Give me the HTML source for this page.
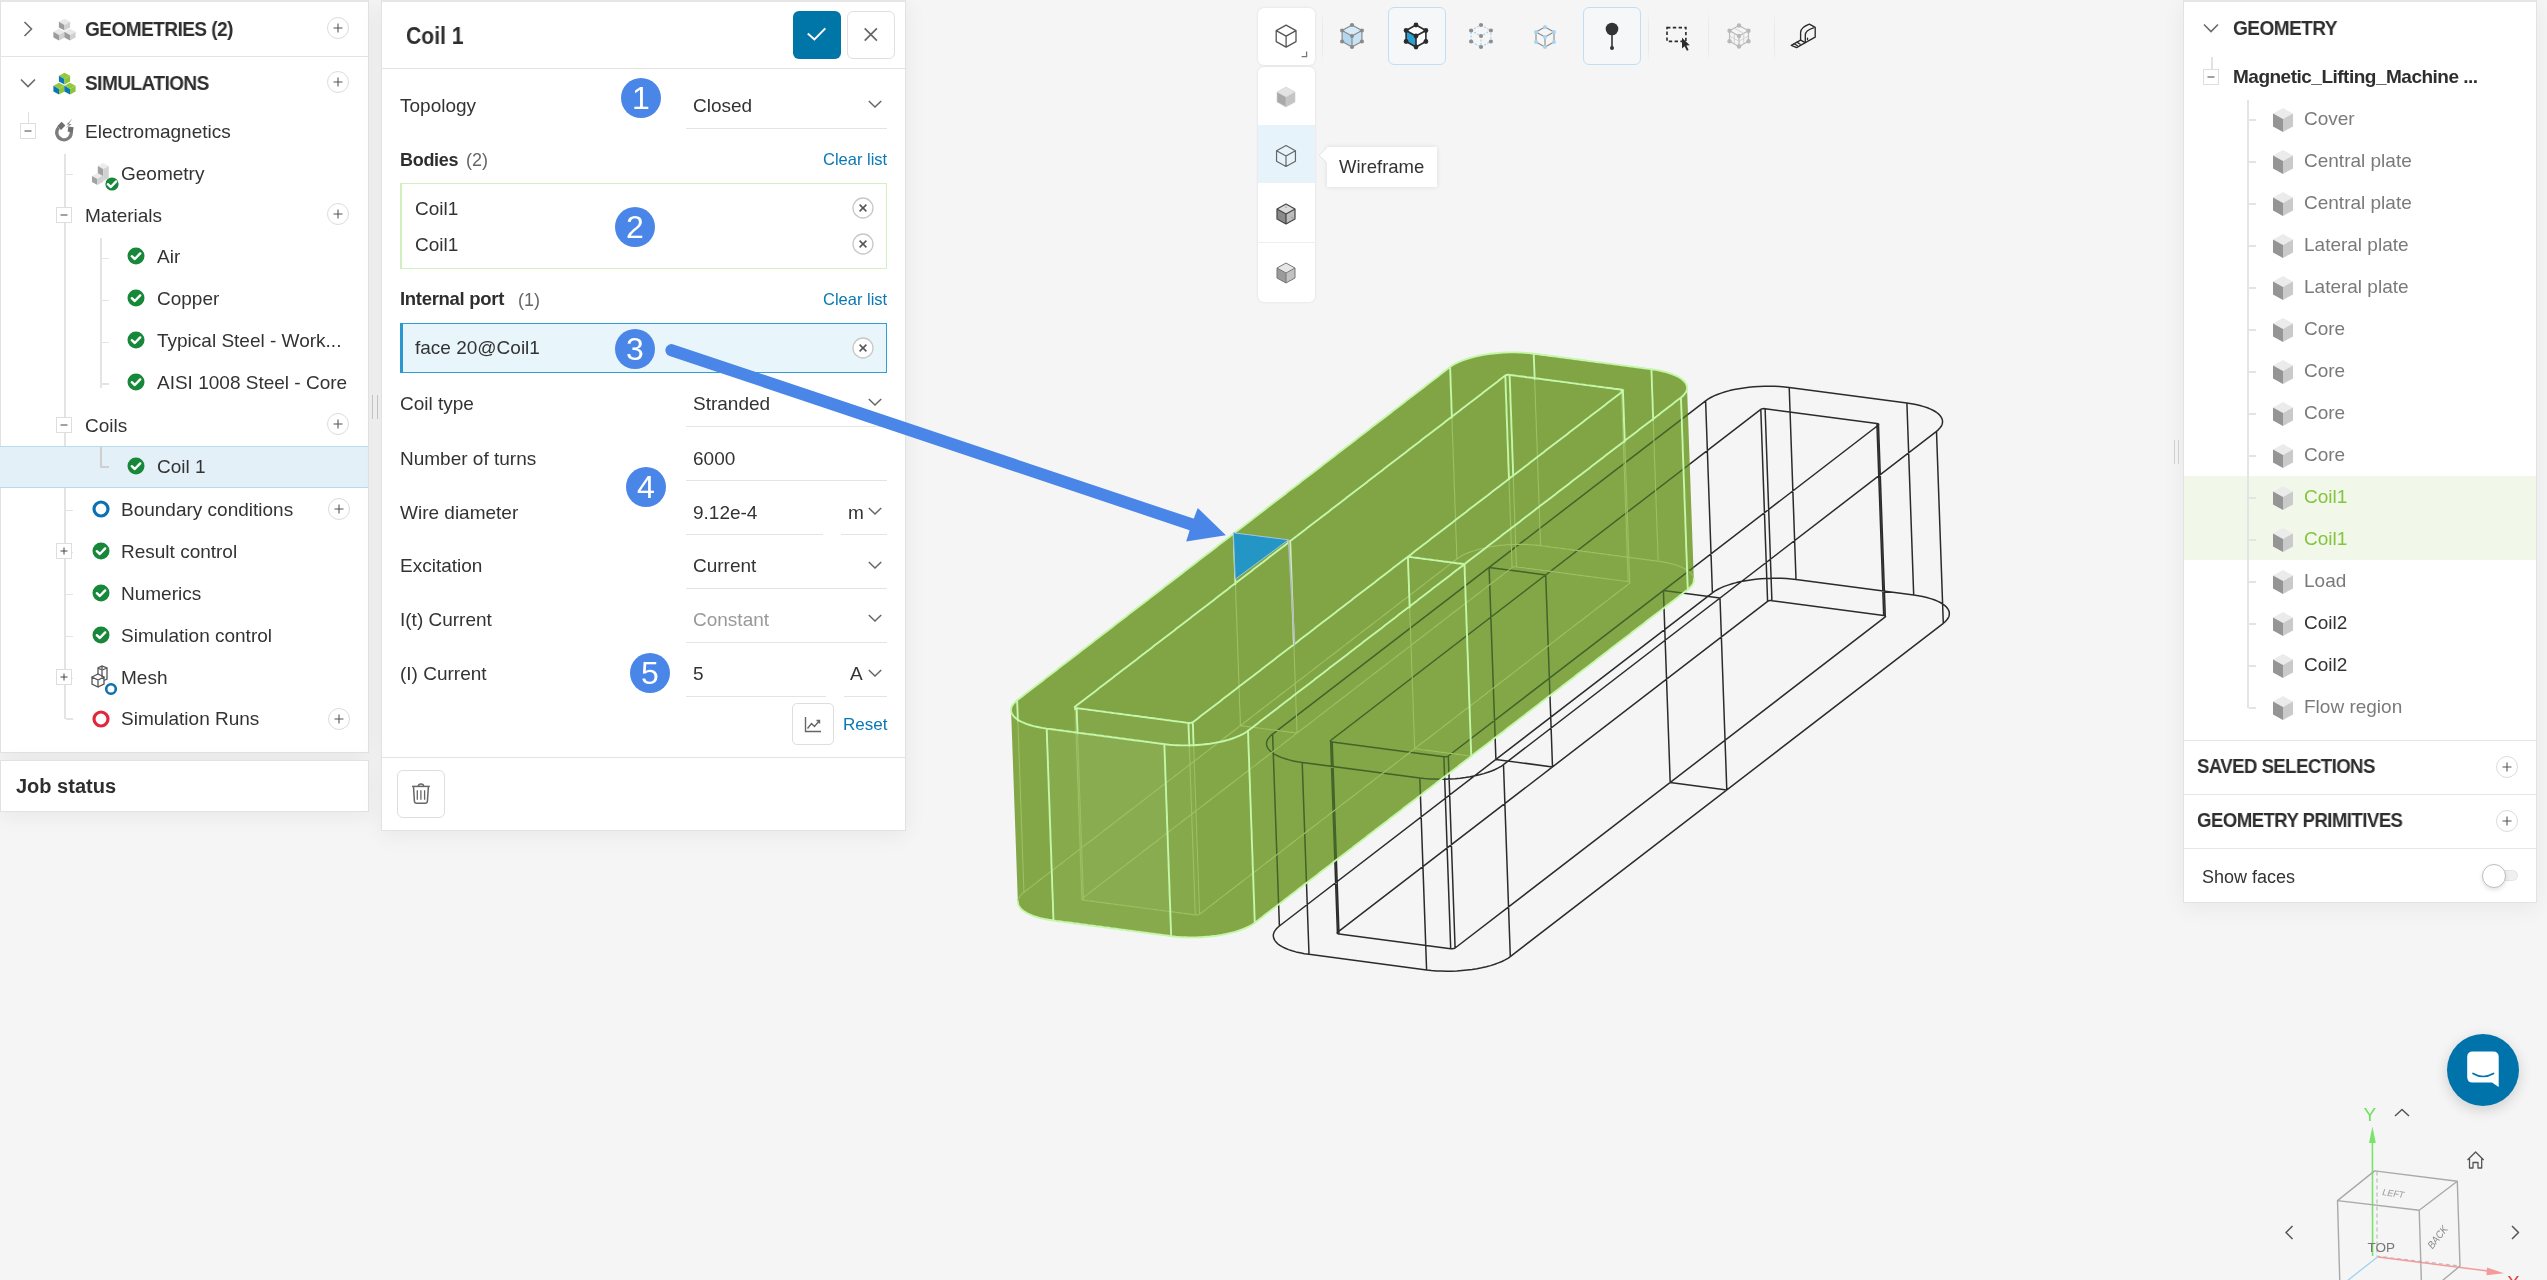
<!DOCTYPE html><html><head><meta charset="utf-8"><style>
html,body{margin:0;padding:0;}
body{width:2547px;height:1280px;position:relative;overflow:hidden;background:#f5f5f5;font-family:"Liberation Sans",sans-serif;}
.t{position:absolute;white-space:nowrap;line-height:1;will-change:transform;}
.panel{position:absolute;background:#fff;box-sizing:border-box;}
</style></head><body>
<div style="position:absolute;left:0px;top:0px;width:369px;height:753px;background:#fff;border:1px solid #e2e2e2;border-top:2px solid #e6e6e6;box-sizing:border-box;box-shadow:0 4px 22px rgba(0,0,0,0.06)"></div>
<div style="position:absolute;left:0px;top:56px;width:369px;height:1px;background:#e3e3e3"></div>
<div style="position:absolute;left:0px;top:760px;width:369px;height:52px;background:#fff;border:1px solid #e2e2e2;box-sizing:border-box;box-shadow:0 4px 22px rgba(0,0,0,0.06)"></div>
<div class="t" style="left:16.0px;top:776.1px;font-size:20px;font-weight:700;color:#2e2e2e;">Job status</div>
<svg style="position:absolute;left:16px;top:17px;" width="24" height="24" viewBox="0 0 24 24"><g transform="translate(12 12)"><path d="M-3.5 -7 L3.5 0 L-3.5 7" fill="none" stroke="#6a6a6a" stroke-width="1.6"/></g></svg>
<svg style="position:absolute;left:52px;top:16px;" width="26" height="26" viewBox="0 0 26 26"><g transform="translate(12.5,8.6)"><path d="M0 -5.9 L5.6 -2.8 L0 0.30000000000000027 L-5.6 -2.8 Z" fill="#e8e8e8"/><path d="M-5.6 -2.8 L0 0.30000000000000027 L0 5.9 L-5.6 2.8 Z" fill="#9c9c9c"/><path d="M5.6 -2.8 L0 0.30000000000000027 L0 5.9 L5.6 2.8 Z" fill="#d0d0d0"/></g><g transform="translate(7,18.6)"><path d="M0 -5.9 L5.6 -2.8 L0 0.30000000000000027 L-5.6 -2.8 Z" fill="#e8e8e8"/><path d="M-5.6 -2.8 L0 0.30000000000000027 L0 5.9 L-5.6 2.8 Z" fill="#9c9c9c"/><path d="M5.6 -2.8 L0 0.30000000000000027 L0 5.9 L5.6 2.8 Z" fill="#d0d0d0"/></g><g transform="translate(18,18.6)"><path d="M0 -5.9 L5.6 -2.8 L0 0.30000000000000027 L-5.6 -2.8 Z" fill="#e8e8e8"/><path d="M-5.6 -2.8 L0 0.30000000000000027 L0 5.9 L-5.6 2.8 Z" fill="#9c9c9c"/><path d="M5.6 -2.8 L0 0.30000000000000027 L0 5.9 L5.6 2.8 Z" fill="#d0d0d0"/></g></svg>
<div class="t" style="left:85.0px;top:18.6px;font-size:20.5px;font-weight:700;color:#2e2e2e;letter-spacing:-0.6px;transform:scaleX(0.93);transform-origin:0 0">GEOMETRIES (2)</div>
<svg style="position:absolute;left:326px;top:16px;" width="24" height="24" viewBox="0 0 24 24"><circle cx="12" cy="12" r="10.5" fill="#fff" stroke="#dcdcdc" stroke-width="1"/><path d="M12 7.5V16.5M7.5 12H16.5" stroke="#555" stroke-width="1.1"/></svg>
<svg style="position:absolute;left:16px;top:71px;" width="24" height="24" viewBox="0 0 24 24"><g transform="translate(12 12)"><path d="M-7 -3.5 L0 3.5 L7 -3.5" fill="none" stroke="#6a6a6a" stroke-width="1.6"/></g></svg>
<svg style="position:absolute;left:52px;top:70px;" width="26" height="26" viewBox="0 0 26 26"><g transform="translate(12.5,8.6)"><path d="M0 -5.9 L5.6 -2.8 L0 0.30000000000000027 L-5.6 -2.8 Z" fill="#93c83f"/><path d="M-5.6 -2.8 L0 0.30000000000000027 L0 5.9 L-5.6 2.8 Z" fill="#0b78b6"/><path d="M5.6 -2.8 L0 0.30000000000000027 L0 5.9 L5.6 2.8 Z" fill="#8cc43a"/></g><g transform="translate(7,18.6)"><path d="M0 -5.9 L5.6 -2.8 L0 0.30000000000000027 L-5.6 -2.8 Z" fill="#93c83f"/><path d="M-5.6 -2.8 L0 0.30000000000000027 L0 5.9 L-5.6 2.8 Z" fill="#0b78b6"/><path d="M5.6 -2.8 L0 0.30000000000000027 L0 5.9 L5.6 2.8 Z" fill="#8cc43a"/></g><g transform="translate(18,18.6)"><path d="M0 -5.9 L5.6 -2.8 L0 0.30000000000000027 L-5.6 -2.8 Z" fill="#93c83f"/><path d="M-5.6 -2.8 L0 0.30000000000000027 L0 5.9 L-5.6 2.8 Z" fill="#0b78b6"/><path d="M5.6 -2.8 L0 0.30000000000000027 L0 5.9 L5.6 2.8 Z" fill="#8cc43a"/></g></svg>
<div class="t" style="left:85.0px;top:72.6px;font-size:20.5px;font-weight:700;color:#2e2e2e;letter-spacing:-0.6px;transform:scaleX(0.93);transform-origin:0 0">SIMULATIONS</div>
<svg style="position:absolute;left:326px;top:70px;" width="24" height="24" viewBox="0 0 24 24"><circle cx="12" cy="12" r="10.5" fill="#fff" stroke="#dcdcdc" stroke-width="1"/><path d="M12 7.5V16.5M7.5 12H16.5" stroke="#555" stroke-width="1.1"/></svg>
<div style="position:absolute;left:28px;top:112px;width:1px;height:11px;background:#dedede"></div>
<div style="position:absolute;left:64px;top:154px;width:2px;height:54px;background:#e4e4e4"></div>
<div style="position:absolute;left:64px;top:223px;width:2px;height:496px;background:#e4e4e4"></div>
<div style="position:absolute;left:100px;top:238px;width:2px;height:150px;background:#e4e4e4"></div>
<div style="position:absolute;left:100px;top:446px;width:2px;height:22px;background:#d8d8d8"></div>
<div style="position:absolute;left:66px;top:174px;width:7px;height:1px;background:#e4e4e4"></div>
<div style="position:absolute;left:66px;top:510px;width:7px;height:1px;background:#e4e4e4"></div>
<div style="position:absolute;left:66px;top:552px;width:7px;height:1px;background:#e4e4e4"></div>
<div style="position:absolute;left:66px;top:594px;width:7px;height:1px;background:#e4e4e4"></div>
<div style="position:absolute;left:66px;top:636px;width:7px;height:1px;background:#e4e4e4"></div>
<div style="position:absolute;left:66px;top:678px;width:7px;height:1px;background:#e4e4e4"></div>
<div style="position:absolute;left:66px;top:718px;width:7px;height:2px;background:#e4e4e4"></div>
<div style="position:absolute;left:102px;top:258px;width:7px;height:1px;background:#e4e4e4"></div>
<div style="position:absolute;left:102px;top:300px;width:7px;height:1px;background:#e4e4e4"></div>
<div style="position:absolute;left:102px;top:342px;width:7px;height:1px;background:#e4e4e4"></div>
<div style="position:absolute;left:100px;top:383px;width:9px;height:2px;background:#e4e4e4"></div>
<div style="position:absolute;left:0px;top:446px;width:368px;height:42px;background:#e3f0f8;border-top:1px solid #b9dbef;border-bottom:1px solid #b9dbef;box-sizing:border-box"></div>
<div style="position:absolute;left:100px;top:447px;width:2px;height:20px;background:#cfcfcf"></div>
<div style="position:absolute;left:100px;top:466px;width:9px;height:2px;background:#cfcfcf"></div>
<svg style="position:absolute;left:20px;top:123px;" width="16" height="16" viewBox="0 0 16 16"><rect x="0.5" y="0.5" width="15" height="15" fill="#fff" stroke="#dedede"/><path d="M4.5 8H11.5" stroke="#444" stroke-width="1"/></svg>
<svg style="position:absolute;left:52px;top:118px;" width="26" height="26" viewBox="0 0 26 26"><path d="M6.6 9.6 A7.3 7.3 0 1 0 19.2 13.2" fill="none" stroke="#7d7d7d" stroke-width="3.2"/><path d="M5.2 8.2 L9.6 3.8 L13.4 7.6 L9 12 Z" fill="#6f6f6f"/><path d="M15.6 13.6 L16.4 8.4 L21.6 9.2 L20.8 14.4 Z" fill="#6f6f6f"/><path d="M20.2 0.8 L14.6 6.4 L17.6 6.6 L13.2 10.6 L19.6 6.2 L16.8 5.8 Z" fill="#7d7d7d"/></svg>
<div class="t" style="left:85.0px;top:122.2px;font-size:19px;font-weight:400;color:#333;">Electromagnetics</div>
<svg style="position:absolute;left:88px;top:158px;" width="26" height="30" viewBox="0 0 26 30"><path d="M9.8 8 L15.3 5 L20.8 8 L15.3 11 Z" fill="#ececec"/><path d="M9.8 8 L15.3 11 L15.3 23 L9.8 20 Z" fill="#a2a2a2"/><path d="M20.8 8 L15.3 11 L15.3 23 L20.8 20 Z" fill="#d2d2d2"/><path d="M4 18 L9.5 15 L15 18 L9.5 21 Z" fill="#ececec"/><path d="M4 18 L9.5 21 L9.5 27 L4 24 Z" fill="#a2a2a2"/><path d="M15 18 L9.5 21 L9.5 27 L15 24 Z" fill="#d2d2d2"/></svg>
<svg style="position:absolute;left:101.5px;top:174px;" width="20" height="20" viewBox="0 0 20 20"><circle cx="10" cy="10" r="6.6" fill="#17873a"/><path d="M5.8 10.2 L8.8 13 L14.2 7.4" fill="none" stroke="#fff" stroke-width="2.4" stroke-linecap="round" stroke-linejoin="round"/></svg>
<div class="t" style="left:121.0px;top:164.4px;font-size:19px;font-weight:400;color:#333;">Geometry</div>
<svg style="position:absolute;left:56px;top:207px;" width="16" height="16" viewBox="0 0 16 16"><rect x="0.5" y="0.5" width="15" height="15" fill="#fff" stroke="#dedede"/><path d="M4.5 8H11.5" stroke="#444" stroke-width="1"/></svg>
<div class="t" style="left:85.0px;top:206.4px;font-size:19px;font-weight:400;color:#333;">Materials</div>
<svg style="position:absolute;left:326px;top:202px;" width="24" height="24" viewBox="0 0 24 24"><circle cx="12" cy="12" r="10.5" fill="#fff" stroke="#dcdcdc" stroke-width="1"/><path d="M12 7.5V16.5M7.5 12H16.5" stroke="#555" stroke-width="1.1"/></svg>
<svg style="position:absolute;left:126px;top:246px;" width="20" height="20" viewBox="0 0 20 20"><circle cx="10" cy="10" r="8.5" fill="#17873a"/><path d="M5.8 10.2 L8.8 13 L14.2 7.4" fill="none" stroke="#fff" stroke-width="2.4" stroke-linecap="round" stroke-linejoin="round"/></svg>
<div class="t" style="left:157.0px;top:247.4px;font-size:19px;font-weight:400;color:#333;">Air</div>
<svg style="position:absolute;left:126px;top:288px;" width="20" height="20" viewBox="0 0 20 20"><circle cx="10" cy="10" r="8.5" fill="#17873a"/><path d="M5.8 10.2 L8.8 13 L14.2 7.4" fill="none" stroke="#fff" stroke-width="2.4" stroke-linecap="round" stroke-linejoin="round"/></svg>
<div class="t" style="left:157.0px;top:289.4px;font-size:19px;font-weight:400;color:#333;">Copper</div>
<svg style="position:absolute;left:126px;top:330px;" width="20" height="20" viewBox="0 0 20 20"><circle cx="10" cy="10" r="8.5" fill="#17873a"/><path d="M5.8 10.2 L8.8 13 L14.2 7.4" fill="none" stroke="#fff" stroke-width="2.4" stroke-linecap="round" stroke-linejoin="round"/></svg>
<div class="t" style="left:157.0px;top:331.4px;font-size:19px;font-weight:400;color:#333;">Typical Steel - Work...</div>
<svg style="position:absolute;left:126px;top:372px;" width="20" height="20" viewBox="0 0 20 20"><circle cx="10" cy="10" r="8.5" fill="#17873a"/><path d="M5.8 10.2 L8.8 13 L14.2 7.4" fill="none" stroke="#fff" stroke-width="2.4" stroke-linecap="round" stroke-linejoin="round"/></svg>
<div class="t" style="left:157.0px;top:373.4px;font-size:19px;font-weight:400;color:#333;">AISI 1008 Steel - Core</div>
<svg style="position:absolute;left:56px;top:417px;" width="16" height="16" viewBox="0 0 16 16"><rect x="0.5" y="0.5" width="15" height="15" fill="#fff" stroke="#dedede"/><path d="M4.5 8H11.5" stroke="#444" stroke-width="1"/></svg>
<div class="t" style="left:85.0px;top:416.4px;font-size:19px;font-weight:400;color:#333;">Coils</div>
<svg style="position:absolute;left:326px;top:412px;" width="24" height="24" viewBox="0 0 24 24"><circle cx="12" cy="12" r="10.5" fill="#fff" stroke="#dcdcdc" stroke-width="1"/><path d="M12 7.5V16.5M7.5 12H16.5" stroke="#555" stroke-width="1.1"/></svg>
<svg style="position:absolute;left:126px;top:456px;" width="20" height="20" viewBox="0 0 20 20"><circle cx="10" cy="10" r="8.5" fill="#17873a"/><path d="M5.8 10.2 L8.8 13 L14.2 7.4" fill="none" stroke="#fff" stroke-width="2.4" stroke-linecap="round" stroke-linejoin="round"/></svg>
<div class="t" style="left:157.0px;top:457.4px;font-size:19px;font-weight:400;color:#333;">Coil 1</div>
<svg style="position:absolute;left:90.5px;top:499px;" width="20" height="20" viewBox="0 0 20 20"><circle cx="10" cy="10" r="7" fill="none" stroke="#0a72b0" stroke-width="3.2"/></svg>
<div class="t" style="left:121.0px;top:499.9px;font-size:19px;font-weight:400;color:#333;">Boundary conditions</div>
<svg style="position:absolute;left:326.5px;top:497px;" width="24" height="24" viewBox="0 0 24 24"><circle cx="12" cy="12" r="10.5" fill="#fff" stroke="#dcdcdc" stroke-width="1"/><path d="M12 7.5V16.5M7.5 12H16.5" stroke="#555" stroke-width="1.1"/></svg>
<svg style="position:absolute;left:56px;top:543px;" width="16" height="16" viewBox="0 0 16 16"><rect x="0.5" y="0.5" width="15" height="15" fill="#fff" stroke="#dedede"/><path d="M4.5 8H11.5" stroke="#444" stroke-width="1"/><path d="M8 4.5V11.5" stroke="#444" stroke-width="1"/></svg>
<svg style="position:absolute;left:90.5px;top:541px;" width="20" height="20" viewBox="0 0 20 20"><circle cx="10" cy="10" r="8.5" fill="#17873a"/><path d="M5.8 10.2 L8.8 13 L14.2 7.4" fill="none" stroke="#fff" stroke-width="2.4" stroke-linecap="round" stroke-linejoin="round"/></svg>
<div class="t" style="left:121.0px;top:541.9px;font-size:19px;font-weight:400;color:#333;">Result control</div>
<svg style="position:absolute;left:90.5px;top:583px;" width="20" height="20" viewBox="0 0 20 20"><circle cx="10" cy="10" r="8.5" fill="#17873a"/><path d="M5.8 10.2 L8.8 13 L14.2 7.4" fill="none" stroke="#fff" stroke-width="2.4" stroke-linecap="round" stroke-linejoin="round"/></svg>
<div class="t" style="left:121.0px;top:583.9px;font-size:19px;font-weight:400;color:#333;">Numerics</div>
<svg style="position:absolute;left:90.5px;top:625px;" width="20" height="20" viewBox="0 0 20 20"><circle cx="10" cy="10" r="8.5" fill="#17873a"/><path d="M5.8 10.2 L8.8 13 L14.2 7.4" fill="none" stroke="#fff" stroke-width="2.4" stroke-linecap="round" stroke-linejoin="round"/></svg>
<div class="t" style="left:121.0px;top:625.9px;font-size:19px;font-weight:400;color:#333;">Simulation control</div>
<svg style="position:absolute;left:56px;top:669px;" width="16" height="16" viewBox="0 0 16 16"><rect x="0.5" y="0.5" width="15" height="15" fill="#fff" stroke="#dedede"/><path d="M4.5 8H11.5" stroke="#444" stroke-width="1"/><path d="M8 4.5V11.5" stroke="#444" stroke-width="1"/></svg>
<svg style="position:absolute;left:90px;top:665px;" width="24" height="26" viewBox="0 0 24 26"><g fill="none" stroke="#555" stroke-width="1.3"><path d="M2 12 L8 9 L14 12 L8 15 Z M2 12 V19 L8 22 V15 M8 22 L14 19 V12"/><path d="M8 9 V3 L12 1 L17 3 V14 L14 15.5 M12 1 V4 M8 3 L12 5 L17 3 M12 5 V12"/></g></svg>
<svg style="position:absolute;left:101px;top:679px;" width="20" height="20" viewBox="0 0 20 20"><circle cx="10" cy="10" r="4.8" fill="none" stroke="#0a72b0" stroke-width="2.6"/></svg>
<div class="t" style="left:121.0px;top:667.9px;font-size:19px;font-weight:400;color:#333;">Mesh</div>
<svg style="position:absolute;left:90.5px;top:709px;" width="20" height="20" viewBox="0 0 20 20"><circle cx="10" cy="10" r="7" fill="none" stroke="#e0283c" stroke-width="3.2"/></svg>
<div class="t" style="left:121.0px;top:709.4px;font-size:19px;font-weight:400;color:#333;">Simulation Runs</div>
<svg style="position:absolute;left:326.5px;top:707px;" width="24" height="24" viewBox="0 0 24 24"><circle cx="12" cy="12" r="10.5" fill="#fff" stroke="#dcdcdc" stroke-width="1"/><path d="M12 7.5V16.5M7.5 12H16.5" stroke="#555" stroke-width="1.1"/></svg>
<div style="position:absolute;left:372px;top:395px;width:1px;height:24px;background:#c6c6c6"></div>
<div style="position:absolute;left:377px;top:395px;width:1px;height:24px;background:#c6c6c6"></div>
<div style="position:absolute;left:381px;top:0px;width:525px;height:831px;background:#fff;border:1px solid #e2e2e2;border-top:2px solid #e6e6e6;box-sizing:border-box;box-shadow:0 4px 22px rgba(0,0,0,0.06)"></div>
<div class="t" style="left:406.0px;top:24.5px;font-size:23px;font-weight:700;color:#2e2e2e;transform:scaleX(0.92);transform-origin:0 0">Coil 1</div>
<div style="position:absolute;left:793px;top:11px;width:48px;height:48px;background:#0076a8;border-radius:6px"></div>
<svg style="position:absolute;left:793px;top:11px;" width="48" height="48" viewBox="0 0 48 48"><path d="M14.8 22.6 L21.4 28.4 L32.3 17.4" fill="none" stroke="#fff" stroke-width="2"/></svg>
<div style="position:absolute;left:847px;top:11px;width:48px;height:48px;background:#fff;border:1px solid #e0e0e0;border-radius:6px;box-sizing:border-box"></div>
<svg style="position:absolute;left:847px;top:11px;" width="48" height="48" viewBox="0 0 48 48"><path d="M17.7 17.4 L29.9 29.6 M29.9 17.4 L17.7 29.6" fill="none" stroke="#666" stroke-width="1.7"/></svg>
<div style="position:absolute;left:382px;top:68px;width:523px;height:1px;background:#e3e3e3"></div>
<div class="t" style="left:400.0px;top:95.6px;font-size:19px;font-weight:400;color:#333;">Topology</div>
<div class="t" style="left:692.5px;top:95.9px;font-size:19px;font-weight:400;color:#333;">Closed</div>
<svg style="position:absolute;left:867px;top:99px;" width="16" height="10" viewBox="0 0 16 10"><path d="M1.8 2 L8 8 L14.2 2" fill="none" stroke="#666" stroke-width="1.5"/></svg>
<div style="position:absolute;left:686px;top:128px;width:201px;height:1px;background:#e4e4e4"></div>
<div class="t" style="left:400.0px;top:150.8px;font-size:18px;font-weight:700;color:#2e2e2e;letter-spacing:-0.3px">Bodies</div>
<div class="t" style="left:466.0px;top:150.8px;font-size:18px;font-weight:400;color:#666;">(2)</div>
<div class="t" style="right:1660.0px;top:151.0px;font-size:16.5px;font-weight:400;color:#0a78b4;">Clear list</div>
<div style="position:absolute;left:400px;top:183px;width:487px;height:86px;background:#fff;border:1.5px solid #d2f1bd;border-left:2.5px solid #d2f0bd;box-sizing:border-box"></div>
<div class="t" style="left:415.3px;top:198.5px;font-size:19px;font-weight:400;color:#333;">Coil1</div>
<div class="t" style="left:415.3px;top:234.6px;font-size:19px;font-weight:400;color:#333;">Coil1</div>
<svg style="position:absolute;left:850.5px;top:196px;" width="24" height="24" viewBox="0 0 24 24"><circle cx="12" cy="12" r="10" fill="#fff" stroke="#c8c8c8" stroke-width="1.3"/><path d="M8.6 8.6L15.4 15.4M15.4 8.6L8.6 15.4" stroke="#555" stroke-width="1.5"/></svg>
<svg style="position:absolute;left:850.5px;top:232px;" width="24" height="24" viewBox="0 0 24 24"><circle cx="12" cy="12" r="10" fill="#fff" stroke="#c8c8c8" stroke-width="1.3"/><path d="M8.6 8.6L15.4 15.4M15.4 8.6L8.6 15.4" stroke="#555" stroke-width="1.5"/></svg>
<div class="t" style="left:400.0px;top:290.3px;font-size:18.5px;font-weight:700;color:#2e2e2e;letter-spacing:-0.3px">Internal port</div>
<div class="t" style="left:518.0px;top:290.8px;font-size:18px;font-weight:400;color:#666;">(1)</div>
<div class="t" style="right:1660.0px;top:291.0px;font-size:16.5px;font-weight:400;color:#0a78b4;">Clear list</div>
<div style="position:absolute;left:400px;top:323px;width:487px;height:50px;background:#e8f5fb;border:1.5px solid #2f9fd4;border-left:3px solid #2a98cf;box-sizing:border-box"></div>
<div class="t" style="left:415.3px;top:338.3px;font-size:19px;font-weight:400;color:#333;">face 20@Coil1</div>
<svg style="position:absolute;left:850.5px;top:336px;" width="24" height="24" viewBox="0 0 24 24"><circle cx="12" cy="12" r="10" fill="#fff" stroke="#c8c8c8" stroke-width="1.3"/><path d="M8.6 8.6L15.4 15.4M15.4 8.6L8.6 15.4" stroke="#555" stroke-width="1.5"/></svg>
<div class="t" style="left:400.0px;top:393.6px;font-size:19px;font-weight:400;color:#333;">Coil type</div>
<div class="t" style="left:692.5px;top:393.6px;font-size:19px;font-weight:400;color:#333;">Stranded</div>
<svg style="position:absolute;left:867px;top:397.2px;" width="16" height="10" viewBox="0 0 16 10"><path d="M1.8 2 L8 8 L14.2 2" fill="none" stroke="#666" stroke-width="1.5"/></svg>
<div style="position:absolute;left:686px;top:426px;width:201px;height:1px;background:#e4e4e4"></div>
<div class="t" style="left:400.0px;top:448.5px;font-size:19px;font-weight:400;color:#333;">Number of turns</div>
<div class="t" style="left:692.5px;top:448.5px;font-size:19px;font-weight:400;color:#333;">6000</div>
<div style="position:absolute;left:686px;top:480px;width:201px;height:1px;background:#e4e4e4"></div>
<div class="t" style="left:400.0px;top:502.6px;font-size:19px;font-weight:400;color:#333;">Wire diameter</div>
<div class="t" style="left:692.5px;top:502.6px;font-size:19px;font-weight:400;color:#333;">9.12e-4</div>
<div class="t" style="left:847.5px;top:502.6px;font-size:19px;font-weight:400;color:#333;">m</div>
<svg style="position:absolute;left:867px;top:506.20000000000005px;" width="16" height="10" viewBox="0 0 16 10"><path d="M1.8 2 L8 8 L14.2 2" fill="none" stroke="#666" stroke-width="1.5"/></svg>
<div style="position:absolute;left:686px;top:534px;width:137px;height:1px;background:#e4e4e4"></div>
<div style="position:absolute;left:841px;top:534px;width:46px;height:1px;background:#e4e4e4"></div>
<div class="t" style="left:400.0px;top:555.9px;font-size:19px;font-weight:400;color:#333;">Excitation</div>
<div class="t" style="left:692.5px;top:555.9px;font-size:19px;font-weight:400;color:#333;">Current</div>
<svg style="position:absolute;left:867px;top:559.5px;" width="16" height="10" viewBox="0 0 16 10"><path d="M1.8 2 L8 8 L14.2 2" fill="none" stroke="#666" stroke-width="1.5"/></svg>
<div style="position:absolute;left:686px;top:588px;width:201px;height:1px;background:#e4e4e4"></div>
<div class="t" style="left:400.0px;top:609.7px;font-size:19px;font-weight:400;color:#333;">I(t) Current</div>
<div class="t" style="left:692.5px;top:609.7px;font-size:19px;font-weight:400;color:#999;">Constant</div>
<svg style="position:absolute;left:867px;top:613.3px;" width="16" height="10" viewBox="0 0 16 10"><path d="M1.8 2 L8 8 L14.2 2" fill="none" stroke="#666" stroke-width="1.5"/></svg>
<div style="position:absolute;left:686px;top:642px;width:201px;height:1px;background:#e4e4e4"></div>
<div class="t" style="left:400.0px;top:664.4px;font-size:19px;font-weight:400;color:#333;">(I) Current</div>
<div class="t" style="left:692.5px;top:664.4px;font-size:19px;font-weight:400;color:#333;">5</div>
<div class="t" style="left:849.5px;top:664.4px;font-size:19px;font-weight:400;color:#333;">A</div>
<svg style="position:absolute;left:867px;top:668.0px;" width="16" height="10" viewBox="0 0 16 10"><path d="M1.8 2 L8 8 L14.2 2" fill="none" stroke="#666" stroke-width="1.5"/></svg>
<div style="position:absolute;left:686px;top:696px;width:140px;height:1px;background:#e4e4e4"></div>
<div style="position:absolute;left:844px;top:696px;width:43px;height:1px;background:#e4e4e4"></div>
<div style="position:absolute;left:792px;top:703px;width:42px;height:42px;background:#fff;border:1px solid #dedede;border-radius:5px;box-sizing:border-box"></div>
<svg style="position:absolute;left:792px;top:703px;" width="42" height="42" viewBox="0 0 42 42"><path d="M13.5 14 V28.5 H29" fill="none" stroke="#666" stroke-width="1.4"/><path d="M15.5 25.5 L19.5 20.5 L22.5 23.5 L27.5 17.5 M24.5 17.5 H27.5 V20.5" fill="none" stroke="#666" stroke-width="1.4"/></svg>
<div class="t" style="right:1660.0px;top:715.6px;font-size:17px;font-weight:400;color:#0a78b4;">Reset</div>
<div style="position:absolute;left:382px;top:757px;width:523px;height:1px;background:#e3e3e3"></div>
<div style="position:absolute;left:397px;top:770px;width:48px;height:48px;background:#fff;border:1px solid #dedede;border-radius:6px;box-sizing:border-box"></div>
<svg style="position:absolute;left:397px;top:770px;" width="48" height="48" viewBox="0 0 48 48"><g fill="none" stroke="#666" stroke-width="1.5"><path d="M15 16.4 H32.8"/><path d="M21.4 16.2 A2.6 2.2 0 0 1 26.6 16.2"/><path d="M16.5 16.5 L17.4 31.2 Q17.6 33.2 19.6 33.2 H28.2 Q30.2 33.2 30.4 31.2 L31.4 16.5"/><path d="M20.3 20.2 V29.8 M23.9 20.2 V29.8 M27.6 20.2 V29.8" stroke-width="1.3"/></g></svg>
<div style="position:absolute;left:2183px;top:0px;width:354px;height:903px;background:#fff;border:1px solid #e2e2e2;border-top:2px solid #e6e6e6;box-sizing:border-box;box-shadow:0 4px 22px rgba(0,0,0,0.06)"></div>
<svg style="position:absolute;left:2199px;top:16px;" width="24" height="24" viewBox="0 0 24 24"><g transform="translate(12 12)"><path d="M-7 -3.5 L0 3.5 L7 -3.5" fill="none" stroke="#6a6a6a" stroke-width="1.6"/></g></svg>
<div class="t" style="left:2233.0px;top:18.1px;font-size:20.5px;font-weight:700;color:#2e2e2e;letter-spacing:-0.6px;transform:scaleX(0.93);transform-origin:0 0">GEOMETRY</div>
<div style="position:absolute;left:2211px;top:57px;width:2px;height:12px;background:#e2e2e2"></div>
<svg style="position:absolute;left:2203px;top:69px;" width="16" height="16" viewBox="0 0 16 16"><rect x="0.5" y="0.5" width="15" height="15" fill="#fff" stroke="#dedede"/><path d="M4.5 8H11.5" stroke="#444" stroke-width="1"/></svg>
<div class="t" style="left:2232.6px;top:67.4px;font-size:19px;font-weight:700;color:#2e2e2e;letter-spacing:-0.5px">Magnetic_Lifting_Machine ...</div>
<div style="position:absolute;left:2184px;top:476px;width:352px;height:84px;background:#f1f8ea"></div>
<div style="position:absolute;left:2247px;top:100px;width:2px;height:608px;background:#e4e4e4"></div>
<div style="position:absolute;left:2249px;top:119px;width:7px;height:2px;background:#e4e4e4"></div>
<svg style="position:absolute;left:2271.8px;top:106.5px;" width="22" height="26" viewBox="0 0 22 26"><path d="M11 1 L21 6.5 L11 12 L1 6.5 Z" fill="#ebebeb"/><path d="M1 6.5 L11 12 L11 25 L1 19.5 Z" fill="#959595"/><path d="M21 6.5 L11 12 L11 25 L21 19.5 Z" fill="#cacaca"/></svg>
<div class="t" style="left:2304.4px;top:109.4px;font-size:19px;font-weight:400;color:#7a7a7a;">Cover</div>
<div style="position:absolute;left:2249px;top:161px;width:7px;height:2px;background:#e4e4e4"></div>
<svg style="position:absolute;left:2271.8px;top:148.5px;" width="22" height="26" viewBox="0 0 22 26"><path d="M11 1 L21 6.5 L11 12 L1 6.5 Z" fill="#ebebeb"/><path d="M1 6.5 L11 12 L11 25 L1 19.5 Z" fill="#959595"/><path d="M21 6.5 L11 12 L11 25 L21 19.5 Z" fill="#cacaca"/></svg>
<div class="t" style="left:2304.4px;top:151.4px;font-size:19px;font-weight:400;color:#7a7a7a;">Central plate</div>
<div style="position:absolute;left:2249px;top:203px;width:7px;height:2px;background:#e4e4e4"></div>
<svg style="position:absolute;left:2271.8px;top:190.5px;" width="22" height="26" viewBox="0 0 22 26"><path d="M11 1 L21 6.5 L11 12 L1 6.5 Z" fill="#ebebeb"/><path d="M1 6.5 L11 12 L11 25 L1 19.5 Z" fill="#959595"/><path d="M21 6.5 L11 12 L11 25 L21 19.5 Z" fill="#cacaca"/></svg>
<div class="t" style="left:2304.4px;top:193.4px;font-size:19px;font-weight:400;color:#7a7a7a;">Central plate</div>
<div style="position:absolute;left:2249px;top:245px;width:7px;height:2px;background:#e4e4e4"></div>
<svg style="position:absolute;left:2271.8px;top:232.5px;" width="22" height="26" viewBox="0 0 22 26"><path d="M11 1 L21 6.5 L11 12 L1 6.5 Z" fill="#ebebeb"/><path d="M1 6.5 L11 12 L11 25 L1 19.5 Z" fill="#959595"/><path d="M21 6.5 L11 12 L11 25 L21 19.5 Z" fill="#cacaca"/></svg>
<div class="t" style="left:2304.4px;top:235.4px;font-size:19px;font-weight:400;color:#7a7a7a;">Lateral plate</div>
<div style="position:absolute;left:2249px;top:287px;width:7px;height:2px;background:#e4e4e4"></div>
<svg style="position:absolute;left:2271.8px;top:274.5px;" width="22" height="26" viewBox="0 0 22 26"><path d="M11 1 L21 6.5 L11 12 L1 6.5 Z" fill="#ebebeb"/><path d="M1 6.5 L11 12 L11 25 L1 19.5 Z" fill="#959595"/><path d="M21 6.5 L11 12 L11 25 L21 19.5 Z" fill="#cacaca"/></svg>
<div class="t" style="left:2304.4px;top:277.4px;font-size:19px;font-weight:400;color:#7a7a7a;">Lateral plate</div>
<div style="position:absolute;left:2249px;top:329px;width:7px;height:2px;background:#e4e4e4"></div>
<svg style="position:absolute;left:2271.8px;top:316.5px;" width="22" height="26" viewBox="0 0 22 26"><path d="M11 1 L21 6.5 L11 12 L1 6.5 Z" fill="#ebebeb"/><path d="M1 6.5 L11 12 L11 25 L1 19.5 Z" fill="#959595"/><path d="M21 6.5 L11 12 L11 25 L21 19.5 Z" fill="#cacaca"/></svg>
<div class="t" style="left:2304.4px;top:319.4px;font-size:19px;font-weight:400;color:#7a7a7a;">Core</div>
<div style="position:absolute;left:2249px;top:371px;width:7px;height:2px;background:#e4e4e4"></div>
<svg style="position:absolute;left:2271.8px;top:358.5px;" width="22" height="26" viewBox="0 0 22 26"><path d="M11 1 L21 6.5 L11 12 L1 6.5 Z" fill="#ebebeb"/><path d="M1 6.5 L11 12 L11 25 L1 19.5 Z" fill="#959595"/><path d="M21 6.5 L11 12 L11 25 L21 19.5 Z" fill="#cacaca"/></svg>
<div class="t" style="left:2304.4px;top:361.4px;font-size:19px;font-weight:400;color:#7a7a7a;">Core</div>
<div style="position:absolute;left:2249px;top:413px;width:7px;height:2px;background:#e4e4e4"></div>
<svg style="position:absolute;left:2271.8px;top:400.5px;" width="22" height="26" viewBox="0 0 22 26"><path d="M11 1 L21 6.5 L11 12 L1 6.5 Z" fill="#ebebeb"/><path d="M1 6.5 L11 12 L11 25 L1 19.5 Z" fill="#959595"/><path d="M21 6.5 L11 12 L11 25 L21 19.5 Z" fill="#cacaca"/></svg>
<div class="t" style="left:2304.4px;top:403.4px;font-size:19px;font-weight:400;color:#7a7a7a;">Core</div>
<div style="position:absolute;left:2249px;top:455px;width:7px;height:2px;background:#e4e4e4"></div>
<svg style="position:absolute;left:2271.8px;top:442.5px;" width="22" height="26" viewBox="0 0 22 26"><path d="M11 1 L21 6.5 L11 12 L1 6.5 Z" fill="#ebebeb"/><path d="M1 6.5 L11 12 L11 25 L1 19.5 Z" fill="#959595"/><path d="M21 6.5 L11 12 L11 25 L21 19.5 Z" fill="#cacaca"/></svg>
<div class="t" style="left:2304.4px;top:445.4px;font-size:19px;font-weight:400;color:#7a7a7a;">Core</div>
<div style="position:absolute;left:2249px;top:497px;width:7px;height:2px;background:#e4e4e4"></div>
<svg style="position:absolute;left:2271.8px;top:484.5px;" width="22" height="26" viewBox="0 0 22 26"><path d="M11 1 L21 6.5 L11 12 L1 6.5 Z" fill="#ebebeb"/><path d="M1 6.5 L11 12 L11 25 L1 19.5 Z" fill="#959595"/><path d="M21 6.5 L11 12 L11 25 L21 19.5 Z" fill="#cacaca"/></svg>
<div class="t" style="left:2304.4px;top:487.4px;font-size:19px;font-weight:400;color:#86c440;">Coil1</div>
<div style="position:absolute;left:2249px;top:539px;width:7px;height:2px;background:#e4e4e4"></div>
<svg style="position:absolute;left:2271.8px;top:526.5px;" width="22" height="26" viewBox="0 0 22 26"><path d="M11 1 L21 6.5 L11 12 L1 6.5 Z" fill="#ebebeb"/><path d="M1 6.5 L11 12 L11 25 L1 19.5 Z" fill="#959595"/><path d="M21 6.5 L11 12 L11 25 L21 19.5 Z" fill="#cacaca"/></svg>
<div class="t" style="left:2304.4px;top:529.4px;font-size:19px;font-weight:400;color:#86c440;">Coil1</div>
<div style="position:absolute;left:2249px;top:581px;width:7px;height:2px;background:#e4e4e4"></div>
<svg style="position:absolute;left:2271.8px;top:568.5px;" width="22" height="26" viewBox="0 0 22 26"><path d="M11 1 L21 6.5 L11 12 L1 6.5 Z" fill="#ebebeb"/><path d="M1 6.5 L11 12 L11 25 L1 19.5 Z" fill="#959595"/><path d="M21 6.5 L11 12 L11 25 L21 19.5 Z" fill="#cacaca"/></svg>
<div class="t" style="left:2304.4px;top:571.4px;font-size:19px;font-weight:400;color:#7a7a7a;">Load</div>
<div style="position:absolute;left:2249px;top:623px;width:7px;height:2px;background:#e4e4e4"></div>
<svg style="position:absolute;left:2271.8px;top:610.5px;" width="22" height="26" viewBox="0 0 22 26"><path d="M11 1 L21 6.5 L11 12 L1 6.5 Z" fill="#ebebeb"/><path d="M1 6.5 L11 12 L11 25 L1 19.5 Z" fill="#959595"/><path d="M21 6.5 L11 12 L11 25 L21 19.5 Z" fill="#cacaca"/></svg>
<div class="t" style="left:2304.4px;top:613.4px;font-size:19px;font-weight:400;color:#333;">Coil2</div>
<div style="position:absolute;left:2249px;top:665px;width:7px;height:2px;background:#e4e4e4"></div>
<svg style="position:absolute;left:2271.8px;top:652.5px;" width="22" height="26" viewBox="0 0 22 26"><path d="M11 1 L21 6.5 L11 12 L1 6.5 Z" fill="#ebebeb"/><path d="M1 6.5 L11 12 L11 25 L1 19.5 Z" fill="#959595"/><path d="M21 6.5 L11 12 L11 25 L21 19.5 Z" fill="#cacaca"/></svg>
<div class="t" style="left:2304.4px;top:655.4px;font-size:19px;font-weight:400;color:#333;">Coil2</div>
<div style="position:absolute;left:2249px;top:707px;width:7px;height:2px;background:#e4e4e4"></div>
<svg style="position:absolute;left:2271.8px;top:694.5px;" width="22" height="26" viewBox="0 0 22 26"><path d="M11 1 L21 6.5 L11 12 L1 6.5 Z" fill="#ebebeb"/><path d="M1 6.5 L11 12 L11 25 L1 19.5 Z" fill="#959595"/><path d="M21 6.5 L11 12 L11 25 L21 19.5 Z" fill="#cacaca"/></svg>
<div class="t" style="left:2304.4px;top:697.4px;font-size:19px;font-weight:400;color:#7a7a7a;">Flow region</div>
<div style="position:absolute;left:2184px;top:740px;width:352px;height:1px;background:#e6e6e6"></div>
<div class="t" style="left:2196.6px;top:756.1px;font-size:20px;font-weight:700;color:#2e2e2e;letter-spacing:-0.6px;transform:scaleX(0.93);transform-origin:0 0">SAVED SELECTIONS</div>
<svg style="position:absolute;left:2495px;top:754.5px;" width="24" height="24" viewBox="0 0 24 24"><circle cx="12" cy="12" r="10.5" fill="#fff" stroke="#dcdcdc" stroke-width="1"/><path d="M12 7.5V16.5M7.5 12H16.5" stroke="#555" stroke-width="1.1"/></svg>
<div style="position:absolute;left:2184px;top:794px;width:352px;height:1px;background:#e6e6e6"></div>
<div class="t" style="left:2196.6px;top:809.9px;font-size:20px;font-weight:700;color:#2e2e2e;letter-spacing:-0.6px;transform:scaleX(0.93);transform-origin:0 0">GEOMETRY PRIMITIVES</div>
<svg style="position:absolute;left:2495px;top:808.5px;" width="24" height="24" viewBox="0 0 24 24"><circle cx="12" cy="12" r="10.5" fill="#fff" stroke="#dcdcdc" stroke-width="1"/><path d="M12 7.5V16.5M7.5 12H16.5" stroke="#555" stroke-width="1.1"/></svg>
<div style="position:absolute;left:2184px;top:848px;width:352px;height:1px;background:#e6e6e6"></div>
<div class="t" style="left:2202.3px;top:867.5px;font-size:18px;font-weight:400;color:#333;">Show faces</div>
<div style="position:absolute;left:2494px;top:870px;width:24px;height:11px;background:#f0f0f0;border:1px solid #e4e4e4;border-radius:6px;box-sizing:border-box"></div>
<div style="position:absolute;left:2482px;top:864px;width:24px;height:24px;background:#fff;border:1px solid #bdbdbd;border-radius:50%;box-sizing:border-box;box-shadow:0 2px 4px rgba(0,0,0,0.12)"></div>
<div style="position:absolute;left:2174px;top:440px;width:1px;height:24px;background:#d0d0d0"></div>
<div style="position:absolute;left:2178px;top:440px;width:1px;height:24px;background:#d0d0d0"></div>
<div style="position:absolute;left:1258px;top:8px;width:57px;height:57px;background:#fff;border-radius:6px;box-shadow:0 0 3px rgba(0,0,0,0.10)"></div>
<svg style="position:absolute;left:1258px;top:8px;" width="57" height="57" viewBox="0 0 57 57"><g transform="translate(28.1 28.1)"><path d="M0.00 -11.00 L9.90 -5.50 L9.90 5.50 L0.00 11.00 L-9.90 5.50 L-9.90 -5.50 Z M-9.90 -5.50 L0.00 0.00 L9.90 -5.50 M0.00 0.00 L0.00 11.00" fill="none" stroke="#555" stroke-width="1.3" stroke-linejoin="round"/></g><path d="M43.6 48.6 H48.6 V43.4" fill="none" stroke="#777" stroke-width="1.3"/></svg>
<div style="position:absolute;left:1322px;top:12px;width:1px;height:50px;background:linear-gradient(#f4f4f4,#e9e9e9 30%,#e9e9e9 70%,#f4f4f4)"></div>
<div style="position:absolute;left:1648px;top:12px;width:1px;height:50px;background:linear-gradient(#f4f4f4,#e9e9e9 30%,#e9e9e9 70%,#f4f4f4)"></div>
<div style="position:absolute;left:1708px;top:12px;width:1px;height:50px;background:linear-gradient(#f4f4f4,#e9e9e9 30%,#e9e9e9 70%,#f4f4f4)"></div>
<div style="position:absolute;left:1774px;top:12px;width:1px;height:50px;background:linear-gradient(#f4f4f4,#e9e9e9 30%,#e9e9e9 70%,#f4f4f4)"></div>
<svg style="position:absolute;left:1336px;top:20px;" width="32" height="32" viewBox="0 0 32 32"><g transform="translate(16 16)"><path d="M0.00 -11.00 L9.90 -5.50 L0.00 0.00 L-9.90 -5.50 Z" fill="#d6ebf8"/><path d="M-9.90 -5.50 L0.00 0.00 L0.00 11.00 L-9.90 5.50 Z" fill="#b3d6f1"/><path d="M0.00 0.00 L9.90 -5.50 L9.90 5.50 L0.00 11.00 Z" fill="#c9e3f6"/><path d="M0.00 -11.00 L9.90 -5.50 L9.90 5.50 L0.00 11.00 L-9.90 5.50 L-9.90 -5.50 Z M-9.90 -5.50 L0.00 0.00 L9.90 -5.50 M0.00 0.00 L0.00 11.00" fill="none" stroke="#8a8a8a" stroke-width="1.2" stroke-linejoin="round"/><circle cx="0.00" cy="-11.00" r="2.1" fill="#8a8a8a"/><circle cx="9.90" cy="-5.50" r="2.1" fill="#8a8a8a"/><circle cx="9.90" cy="5.50" r="2.1" fill="#8a8a8a"/><circle cx="0.00" cy="11.00" r="2.1" fill="#8a8a8a"/><circle cx="-9.90" cy="5.50" r="2.1" fill="#8a8a8a"/><circle cx="-9.90" cy="-5.50" r="2.1" fill="#8a8a8a"/><circle cx="0.00" cy="0.00" r="2.1" fill="#8a8a8a"/></g></svg>
<div style="position:absolute;left:1388px;top:7px;width:58px;height:58px;background:#f6f7f8;border:1px solid #bfe0f4;border-radius:6px;box-sizing:border-box"></div>
<svg style="position:absolute;left:1400px;top:20px;" width="32" height="32" viewBox="0 0 32 32"><g transform="translate(16 16)"><path d="M0.00 -11.00 L9.90 -5.50 L0.00 0.00 L-9.90 -5.50 Z" fill="#fff"/><path d="M-9.90 -5.50 L0.00 0.00 L0.00 11.00 L-9.90 5.50 Z" fill="#2a9fd0"/><path d="M0.00 0.00 L9.90 -5.50 L9.90 5.50 L0.00 11.00 Z" fill="#fff"/><path d="M0.00 -11.00 L9.90 -5.50 L9.90 5.50 L0.00 11.00 L-9.90 5.50 L-9.90 -5.50 Z M-9.90 -5.50 L0.00 0.00 L9.90 -5.50 M0.00 0.00 L0.00 11.00" fill="none" stroke="#2b2b2b" stroke-width="1.6" stroke-linejoin="round"/><circle cx="0.00" cy="-11.00" r="2.4" fill="#2b2b2b"/><circle cx="9.90" cy="-5.50" r="2.4" fill="#2b2b2b"/><circle cx="9.90" cy="5.50" r="2.4" fill="#2b2b2b"/><circle cx="0.00" cy="11.00" r="2.4" fill="#2b2b2b"/><circle cx="-9.90" cy="5.50" r="2.4" fill="#2b2b2b"/><circle cx="-9.90" cy="-5.50" r="2.4" fill="#2b2b2b"/><circle cx="0.00" cy="0.00" r="2.4" fill="#2b2b2b"/></g></svg>
<svg style="position:absolute;left:1465px;top:20px;" width="32" height="32" viewBox="0 0 32 32"><g transform="translate(16 16)"><path d="M0.00 -11.00 L9.90 -5.50 L9.90 5.50 L0.00 11.00 L-9.90 5.50 L-9.90 -5.50 Z M-9.90 -5.50 L0.00 0.00 L9.90 -5.50 M0.00 0.00 L0.00 11.00" fill="none" stroke="#9fd0ef" stroke-width="1.1" stroke-linejoin="round" stroke-dasharray="2 1.5"/><circle cx="0.00" cy="-11.00" r="2.1" fill="#8e8e8e"/><circle cx="9.90" cy="-5.50" r="2.1" fill="#8e8e8e"/><circle cx="9.90" cy="5.50" r="2.1" fill="#8e8e8e"/><circle cx="0.00" cy="11.00" r="2.1" fill="#8e8e8e"/><circle cx="-9.90" cy="5.50" r="2.1" fill="#8e8e8e"/><circle cx="-9.90" cy="-5.50" r="2.1" fill="#8e8e8e"/><circle cx="0.00" cy="0.00" r="2.1" fill="#8e8e8e"/></g></svg>
<svg style="position:absolute;left:1529px;top:21px;" width="32" height="32" viewBox="0 0 32 32"><g transform="translate(16 16)"><path d="M0.00 -10.00 L9.00 -5.00 L9.00 5.00 L0.00 10.00 L-9.00 5.00 L-9.00 -5.00 Z M-9.00 -5.00 L0.00 0.00 L9.00 -5.00 M0.00 0.00 L0.00 10.00" fill="none" stroke="#8a8a8a" stroke-width="1.1" stroke-linejoin="round"/><circle cx="0.00" cy="-10.00" r="2.0" fill="#a9d4f1"/><circle cx="9.00" cy="-5.00" r="2.0" fill="#a9d4f1"/><circle cx="9.00" cy="5.00" r="2.0" fill="#a9d4f1"/><circle cx="0.00" cy="10.00" r="2.0" fill="#a9d4f1"/><circle cx="-9.00" cy="5.00" r="2.0" fill="#a9d4f1"/><circle cx="-9.00" cy="-5.00" r="2.0" fill="#a9d4f1"/><circle cx="0.00" cy="0.00" r="2.0" fill="#a9d4f1"/></g></svg>
<div style="position:absolute;left:1583px;top:7px;width:58px;height:58px;background:#f6f7f8;border:1px solid #bfe0f4;border-radius:6px;box-sizing:border-box"></div>
<svg style="position:absolute;left:1583px;top:7px;" width="58" height="58" viewBox="0 0 58 58"><circle cx="29" cy="22" r="6.3" fill="#333"/><path d="M29 25 V40" stroke="#333" stroke-width="1.6"/><circle cx="29" cy="41" r="2" fill="#333"/></svg>
<svg style="position:absolute;left:1660px;top:20px;" width="34" height="34" viewBox="0 0 34 34"><rect x="7" y="7.6" width="18.9" height="13.8" fill="none" stroke="#2b2b2b" stroke-width="1.6" stroke-dasharray="3.4 2.4"/><path d="M22 17.7 L22 28.6 L24.6 26.3 L26.9 30.7 L28.6 29.9 L26.4 25.5 L29.8 25.2 Z" fill="#2b2b2b"/></svg>
<svg style="position:absolute;left:1723px;top:20px;" width="32" height="32" viewBox="0 0 32 32"><g transform="translate(16 16)"><path d="M0.00 -10.50 L9.45 -5.25 L9.45 5.25 L0.00 10.50 L-9.45 5.25 L-9.45 -5.25 Z M-9.45 -5.25 L0.00 0.00 L9.45 -5.25 M0.00 0.00 L0.00 10.50" fill="none" stroke="#b9b9b9" stroke-width="1.2" stroke-linejoin="round"/><circle cx="0.00" cy="-10.50" r="2.2" fill="#b9b9b9"/><circle cx="9.45" cy="-5.25" r="2.2" fill="#b9b9b9"/><circle cx="9.45" cy="5.25" r="2.2" fill="#b9b9b9"/><circle cx="0.00" cy="10.50" r="2.2" fill="#b9b9b9"/><circle cx="-9.45" cy="5.25" r="2.2" fill="#b9b9b9"/><circle cx="-9.45" cy="-5.25" r="2.2" fill="#b9b9b9"/><circle cx="0.00" cy="0.00" r="2.2" fill="#b9b9b9"/><path d="M-4.7 -7.7 L4.7 -2.7 M-4.7 7.7 V-2.7 M4.7 7.7 V-2.7 M-9.4 0 L0 5.2 L9.4 0" stroke="#cfcfcf" stroke-width="0.9" fill="none"/></g></svg>
<svg style="position:absolute;left:1780px;top:15px;" width="50" height="40" viewBox="0 0 50 40"><g fill="none" stroke="#2b2b2b" stroke-width="1.35" stroke-linejoin="round" stroke-linecap="round"><path d="M20.6 25.2 V17.6 Q20.6 12.4 29.4 9.2 L35.2 12.4 V22.2 L25.3 27.6 L20.6 25.2"/><path d="M25.3 27.4 V20.2 Q25.3 15.2 33.6 12.9"/><path d="M25.3 27.6 L16.6 32.6 L11.3 30.4 L20.6 25.2"/><path d="M14.2 28.7 L17.4 30.7 M17 27.1 L20.2 29.2 M27.5 23.2 V24.5"/></g></svg>
<div style="position:absolute;left:1258px;top:67px;width:57px;height:235px;background:#fff;border-radius:6px;box-shadow:0 0 3px rgba(0,0,0,0.10)"></div>
<div style="position:absolute;left:1258px;top:125px;width:57px;height:58px;background:#e6f3fb"></div>
<div style="position:absolute;left:1258px;top:242px;width:57px;height:1px;background:#eeeeee"></div>
<svg style="position:absolute;left:1270px;top:81px;" width="32" height="32" viewBox="0 0 32 32"><g transform="translate(16 16)"><path d="M0.00 -10.00 L9.00 -5.00 L0.00 0.00 L-9.00 -5.00 Z" fill="#e3e3e3"/><path d="M-9.00 -5.00 L0.00 0.00 L0.00 10.00 L-9.00 5.00 Z" fill="#a9a9a9"/><path d="M0.00 0.00 L9.00 -5.00 L9.00 5.00 L0.00 10.00 Z" fill="#c4c4c4"/><path d="M0.00 -10.00 L9.00 -5.00 L9.00 5.00 L0.00 10.00 L-9.00 5.00 L-9.00 -5.00 Z M-9.00 -5.00 L0.00 0.00 L9.00 -5.00 M0.00 0.00 L0.00 10.00" fill="none" stroke="#cfcfcf" stroke-width="0.6" stroke-linejoin="round"/></g></svg>
<svg style="position:absolute;left:1270px;top:139.5px;" width="32" height="32" viewBox="0 0 32 32"><g transform="translate(16 16)"><path d="M0.00 -10.50 L9.45 -5.25 L9.45 5.25 L0.00 10.50 L-9.45 5.25 L-9.45 -5.25 Z M-9.45 -5.25 L0.00 0.00 L9.45 -5.25 M0.00 0.00 L0.00 10.50" fill="none" stroke="#666" stroke-width="1.2" stroke-linejoin="round"/></g></svg>
<svg style="position:absolute;left:1270px;top:197.7px;" width="32" height="32" viewBox="0 0 32 32"><g transform="translate(16 16)"><path d="M0.00 -10.00 L9.00 -5.00 L0.00 0.00 L-9.00 -5.00 Z" fill="#dcdcdc"/><path d="M-9.00 -5.00 L0.00 0.00 L0.00 10.00 L-9.00 5.00 Z" fill="#8a8a8a"/><path d="M0.00 0.00 L9.00 -5.00 L9.00 5.00 L0.00 10.00 Z" fill="#bdbdbd"/><path d="M0.00 -10.00 L9.00 -5.00 L9.00 5.00 L0.00 10.00 L-9.00 5.00 L-9.00 -5.00 Z M-9.00 -5.00 L0.00 0.00 L9.00 -5.00 M0.00 0.00 L0.00 10.00" fill="none" stroke="#444" stroke-width="1.2" stroke-linejoin="round"/><path d="M0 -10 V-5 M-9 5 L-5 3 M9 5 L5 3" stroke="#777" stroke-width="0.8" stroke-dasharray="1.5 1"/></g></svg>
<svg style="position:absolute;left:1270px;top:256.5px;" width="32" height="32" viewBox="0 0 32 32"><g transform="translate(16 16)"><path d="M0.00 -10.00 L9.00 -5.00 L0.00 0.00 L-9.00 -5.00 Z" fill="#e6e6e6"/><path d="M-9.00 -5.00 L0.00 0.00 L0.00 10.00 L-9.00 5.00 Z" fill="#9b9b9b"/><path d="M0.00 0.00 L9.00 -5.00 L9.00 5.00 L0.00 10.00 Z" fill="#c2c2c2"/><path d="M0.00 -10.00 L9.00 -5.00 L9.00 5.00 L0.00 10.00 L-9.00 5.00 L-9.00 -5.00 Z M-9.00 -5.00 L0.00 0.00 L9.00 -5.00 M0.00 0.00 L0.00 10.00" fill="none" stroke="#777" stroke-width="1.0" stroke-linejoin="round"/></g></svg>
<div style="position:absolute;left:1327px;top:147px;width:110px;height:40px;background:#fff;box-shadow:0 0 5px rgba(0,0,0,0.10)"></div>
<svg style="position:absolute;left:1316px;top:145px;" width="14" height="22" viewBox="0 0 14 22"><path d="M11 2.5 L3 10.3 L11 18 Z" fill="#fff"/><path d="M11 2.5 L3 10.3 L11 18" fill="none" stroke="#e4e4e4" stroke-width="1"/><rect x="10.5" y="3.2" width="4" height="14.5" fill="#fff"/></svg>
<div class="t" style="left:1339.3px;top:157.5px;font-size:18.5px;font-weight:400;color:#333;">Wireframe</div>
<div style="position:absolute;left:2447px;top:1034px;width:72px;height:72px;background:#0173ab;border-radius:50%;box-shadow:0 4px 14px rgba(0,0,0,0.16)"></div>
<svg style="position:absolute;left:2465px;top:1049px;" width="36" height="40" viewBox="0 0 36 40"><path d="M2.2 8 Q2.2 2.5 7.7 2.5 H28.2 Q33.7 2.5 33.7 8 V38 L27 33.5 H7.7 Q2.2 33.5 2.2 28 Z" fill="#fff"/><path d="M8 24.5 Q18 30.5 28.5 24.5" fill="none" stroke="#0173ab" stroke-width="1.7" stroke-linecap="round"/></svg>
<svg style="position:absolute;left:0;top:0" width="2547" height="1280" viewBox="0 0 2547 1280"><defs><clipPath id="sil"><path d="M1011.0 709.2 L1011.4 707.4 L1012.2 705.6 L1013.5 703.8 L1015.1 702.0 L1017.1 700.2 L1450.1 367.0 L1452.5 365.3 L1455.3 363.7 L1458.5 362.1 L1462.0 360.6 L1465.7 359.3 L1469.8 358.0 L1474.1 356.8 L1478.7 355.8 L1483.4 354.9 L1488.3 354.1 L1493.3 353.4 L1498.4 353.0 L1503.5 352.6 L1508.7 352.4 L1513.9 352.4 L1519.0 352.5 L1524.1 352.7 L1529.0 353.1 L1533.8 353.7 L1651.4 369.2 L1656.0 369.9 L1660.3 370.8 L1664.5 371.7 L1668.3 372.8 L1671.9 374.0 L1675.1 375.3 L1678.0 376.7 L1680.5 378.2 L1682.6 379.8 L1684.3 381.5 L1685.6 383.2 L1686.5 384.9 L1687.0 386.7 L1693.8 578.7 L1693.8 580.5 L1693.5 582.4 L1692.7 584.2 L1691.4 586.0 L1689.8 587.8 L1687.8 589.5 L1254.8 922.8 L1252.4 924.5 L1249.6 926.1 L1246.4 927.7 L1242.9 929.1 L1239.2 930.5 L1235.1 931.8 L1230.8 932.9 L1226.2 934.0 L1221.5 934.9 L1216.6 935.7 L1211.6 936.3 L1206.5 936.8 L1201.3 937.2 L1196.2 937.4 L1191.0 937.4 L1185.9 937.3 L1180.8 937.0 L1175.9 936.6 L1171.2 936.1 L1053.5 920.5 L1048.9 919.8 L1044.5 919.0 L1040.4 918.0 L1036.6 917.0 L1033.0 915.8 L1029.8 914.5 L1026.9 913.0 L1024.4 911.5 L1022.3 910.0 L1020.6 908.3 L1019.3 906.6 L1018.4 904.8 L1017.9 903.0 L1011.1 711.1 Z"/></clipPath></defs>
<path d="M1419.8 777.9 L1424.6 778.5 L1429.5 778.9 L1434.6 779.1 L1439.7 779.2 L1444.9 779.2 L1450.0 779.0 L1455.2 778.7 L1460.3 778.2 L1465.3 777.5 L1470.2 776.7 L1474.9 775.8 L1479.5 774.8 L1483.8 773.6 L1487.9 772.3 L1491.6 771.0 L1495.1 769.5 L1498.3 767.9 L1501.1 766.3 L1503.5 764.6 L1936.5 431.4 L1938.5 429.6 L1940.1 427.8 L1941.4 426.0 L1942.2 424.2 L1942.5 422.4 L1942.5 420.6 L1942.0 418.8 L1941.1 417.0 L1939.8 415.3 L1938.1 413.6 L1936.0 412.0 L1933.4 410.5 L1930.6 409.1 L1927.4 407.8 L1923.8 406.6 L1920.0 405.5 L1915.8 404.6 L1911.5 403.7 L1906.9 403.1 L1789.2 387.5 L1784.5 386.9 L1779.6 386.5 L1774.5 386.3 L1769.4 386.2 L1764.2 386.2 L1759.0 386.4 L1753.9 386.8 L1748.8 387.3 L1743.8 387.9 L1738.9 388.7 L1734.1 389.6 L1729.6 390.6 L1725.3 391.8 L1721.2 393.1 L1717.4 394.5 L1714.0 395.9 L1710.8 397.5 L1708.0 399.1 L1705.6 400.8 L1272.6 734.1 L1270.6 735.8 L1269.0 737.6 L1267.7 739.4 L1266.9 741.2 L1266.5 743.1 L1266.6 744.9 L1267.1 746.7 L1268.0 748.4 L1269.3 750.1 L1271.0 751.8 L1273.1 753.4 L1275.6 754.9 L1278.5 756.3 L1281.7 757.6 L1285.3 758.8 L1289.1 759.9 L1293.2 760.9 L1297.6 761.7 L1302.2 762.4 L1419.8 777.9 M1443.9 756.7 L1444.9 756.8 L1445.9 756.8 L1446.9 756.6 L1447.7 756.4 L1448.3 756.0 L1878.5 425.0 L1878.7 424.6 L1878.7 424.2 L1878.4 423.9 L1877.8 423.7 L1876.9 423.5 L1765.1 408.7 L1764.2 408.6 L1763.1 408.7 L1762.2 408.8 L1761.4 409.1 L1760.8 409.4 L1330.6 740.5 L1330.3 740.8 L1330.4 741.2 L1330.7 741.5 L1331.3 741.8 L1332.2 741.9 L1443.9 756.7 M1489.1 567.4 L1545.7 574.9 M1663.4 590.5 L1720.0 598.0 M1426.6 969.9 L1431.4 970.5 L1436.3 970.9 L1441.4 971.1 L1446.5 971.2 L1451.7 971.2 L1456.8 971.0 L1462.0 970.6 L1467.1 970.1 L1472.1 969.5 L1477.0 968.7 L1481.7 967.8 L1486.3 966.8 L1490.6 965.6 L1494.7 964.3 L1498.4 962.9 L1501.9 961.5 L1505.1 959.9 L1507.9 958.3 L1510.3 956.6 L1943.3 623.3 L1945.3 621.6 L1946.9 619.8 L1948.2 618.0 L1949.0 616.2 L1949.3 614.3 L1949.3 612.5 L1948.8 610.7 L1947.9 609.0 L1946.6 607.3 L1944.9 605.6 L1942.8 604.0 L1940.3 602.5 L1937.4 601.1 L1934.2 599.8 L1930.6 598.6 L1926.8 597.5 L1922.6 596.5 L1918.3 595.7 L1913.7 595.0 L1796.0 579.5 L1791.3 578.9 L1786.4 578.5 L1781.3 578.3 L1776.2 578.2 L1771.0 578.2 L1765.8 578.4 L1760.7 578.7 L1755.6 579.2 L1750.6 579.9 L1745.7 580.7 L1740.9 581.6 L1736.4 582.6 L1732.1 583.8 L1728.0 585.1 L1724.2 586.4 L1720.8 587.9 L1717.6 589.5 L1714.8 591.1 L1712.4 592.8 L1279.4 926.0 L1277.4 927.8 L1275.8 929.6 L1274.5 931.4 L1273.7 933.2 L1273.3 935.0 L1273.4 936.8 L1273.9 938.6 L1274.8 940.4 L1276.1 942.1 L1277.8 943.8 L1279.9 945.4 L1282.4 946.9 L1285.3 948.3 L1288.5 949.6 L1292.1 950.8 L1295.9 951.9 L1300.0 952.8 L1304.4 953.7 L1309.0 954.3 L1426.6 969.9 M1450.7 948.7 L1451.7 948.8 L1452.7 948.7 L1453.7 948.6 L1454.5 948.3 L1455.1 948.0 L1885.3 616.9 L1885.5 616.6 L1885.5 616.2 L1885.2 615.9 L1884.6 615.6 L1883.7 615.5 L1771.9 600.7 L1771.0 600.6 L1769.9 600.6 L1769.0 600.8 L1768.2 601.0 L1767.6 601.4 L1337.4 932.4 L1337.1 932.8 L1337.2 933.2 L1337.5 933.5 L1338.1 933.7 L1339.0 933.9 L1450.7 948.7 M1495.9 759.4 L1552.5 766.9 M1670.2 782.5 L1726.8 790.0 M1332.2 741.9 L1339.0 933.9 M1330.6 740.5 L1337.4 932.4 M1443.9 756.7 L1450.7 948.7 M1448.3 756.0 L1455.1 948.0 M1878.5 425.0 L1885.3 616.9 M1876.9 423.5 L1883.7 615.5 M1765.1 408.7 L1771.9 600.7 M1760.8 409.4 L1767.6 601.4 M1302.2 762.4 L1309.0 954.3 M1419.8 777.9 L1426.6 969.9 M1503.5 764.6 L1510.3 956.6 M1936.5 431.4 L1943.3 623.3 M1906.9 403.1 L1913.7 595.0 M1789.2 387.5 L1796.0 579.5 M1705.6 400.8 L1712.4 592.8 M1272.6 734.1 L1279.4 926.0 M1489.1 567.4 L1495.9 759.4 M1545.7 574.9 L1552.5 766.9 M1663.4 590.5 L1670.2 782.5 M1720.0 598.0 L1726.8 790.0" fill="none" stroke="#2b2b2b" stroke-width="1.5" stroke-linejoin="round"/>
<path d="M1011.0 709.2 L1011.4 707.4 L1012.2 705.6 L1013.5 703.8 L1015.1 702.0 L1017.1 700.2 L1450.1 367.0 L1452.5 365.3 L1455.3 363.7 L1458.5 362.1 L1462.0 360.6 L1465.7 359.3 L1469.8 358.0 L1474.1 356.8 L1478.7 355.8 L1483.4 354.9 L1488.3 354.1 L1493.3 353.4 L1498.4 353.0 L1503.5 352.6 L1508.7 352.4 L1513.9 352.4 L1519.0 352.5 L1524.1 352.7 L1529.0 353.1 L1533.8 353.7 L1651.4 369.2 L1656.0 369.9 L1660.3 370.8 L1664.5 371.7 L1668.3 372.8 L1671.9 374.0 L1675.1 375.3 L1678.0 376.7 L1680.5 378.2 L1682.6 379.8 L1684.3 381.5 L1685.6 383.2 L1686.5 384.9 L1687.0 386.7 L1693.8 578.7 L1693.8 580.5 L1693.5 582.4 L1692.7 584.2 L1691.4 586.0 L1689.8 587.8 L1687.8 589.5 L1254.8 922.8 L1252.4 924.5 L1249.6 926.1 L1246.4 927.7 L1242.9 929.1 L1239.2 930.5 L1235.1 931.8 L1230.8 932.9 L1226.2 934.0 L1221.5 934.9 L1216.6 935.7 L1211.6 936.3 L1206.5 936.8 L1201.3 937.2 L1196.2 937.4 L1191.0 937.4 L1185.9 937.3 L1180.8 937.0 L1175.9 936.6 L1171.2 936.1 L1053.5 920.5 L1048.9 919.8 L1044.5 919.0 L1040.4 918.0 L1036.6 917.0 L1033.0 915.8 L1029.8 914.5 L1026.9 913.0 L1024.4 911.5 L1022.3 910.0 L1020.6 908.3 L1019.3 906.6 L1018.4 904.8 L1017.9 903.0 L1011.1 711.1 Z" fill="#83a746"/>
<path d="M1419.8 777.9 L1424.6 778.5 L1429.5 778.9 L1434.6 779.1 L1439.7 779.2 L1444.9 779.2 L1450.0 779.0 L1455.2 778.7 L1460.3 778.2 L1465.3 777.5 L1470.2 776.7 L1474.9 775.8 L1479.5 774.8 L1483.8 773.6 L1487.9 772.3 L1491.6 771.0 L1495.1 769.5 L1498.3 767.9 L1501.1 766.3 L1503.5 764.6 L1936.5 431.4 L1938.5 429.6 L1940.1 427.8 L1941.4 426.0 L1942.2 424.2 L1942.5 422.4 L1942.5 420.6 L1942.0 418.8 L1941.1 417.0 L1939.8 415.3 L1938.1 413.6 L1936.0 412.0 L1933.4 410.5 L1930.6 409.1 L1927.4 407.8 L1923.8 406.6 L1920.0 405.5 L1915.8 404.6 L1911.5 403.7 L1906.9 403.1 L1789.2 387.5 L1784.5 386.9 L1779.6 386.5 L1774.5 386.3 L1769.4 386.2 L1764.2 386.2 L1759.0 386.4 L1753.9 386.8 L1748.8 387.3 L1743.8 387.9 L1738.9 388.7 L1734.1 389.6 L1729.6 390.6 L1725.3 391.8 L1721.2 393.1 L1717.4 394.5 L1714.0 395.9 L1710.8 397.5 L1708.0 399.1 L1705.6 400.8 L1272.6 734.1 L1270.6 735.8 L1269.0 737.6 L1267.7 739.4 L1266.9 741.2 L1266.5 743.1 L1266.6 744.9 L1267.1 746.7 L1268.0 748.4 L1269.3 750.1 L1271.0 751.8 L1273.1 753.4 L1275.6 754.9 L1278.5 756.3 L1281.7 757.6 L1285.3 758.8 L1289.1 759.9 L1293.2 760.9 L1297.6 761.7 L1302.2 762.4 L1419.8 777.9 M1443.9 756.7 L1444.9 756.8 L1445.9 756.8 L1446.9 756.6 L1447.7 756.4 L1448.3 756.0 L1878.5 425.0 L1878.7 424.6 L1878.7 424.2 L1878.4 423.9 L1877.8 423.7 L1876.9 423.5 L1765.1 408.7 L1764.2 408.6 L1763.1 408.7 L1762.2 408.8 L1761.4 409.1 L1760.8 409.4 L1330.6 740.5 L1330.3 740.8 L1330.4 741.2 L1330.7 741.5 L1331.3 741.8 L1332.2 741.9 L1443.9 756.7 M1489.1 567.4 L1545.7 574.9 M1663.4 590.5 L1720.0 598.0 M1426.6 969.9 L1431.4 970.5 L1436.3 970.9 L1441.4 971.1 L1446.5 971.2 L1451.7 971.2 L1456.8 971.0 L1462.0 970.6 L1467.1 970.1 L1472.1 969.5 L1477.0 968.7 L1481.7 967.8 L1486.3 966.8 L1490.6 965.6 L1494.7 964.3 L1498.4 962.9 L1501.9 961.5 L1505.1 959.9 L1507.9 958.3 L1510.3 956.6 L1943.3 623.3 L1945.3 621.6 L1946.9 619.8 L1948.2 618.0 L1949.0 616.2 L1949.3 614.3 L1949.3 612.5 L1948.8 610.7 L1947.9 609.0 L1946.6 607.3 L1944.9 605.6 L1942.8 604.0 L1940.3 602.5 L1937.4 601.1 L1934.2 599.8 L1930.6 598.6 L1926.8 597.5 L1922.6 596.5 L1918.3 595.7 L1913.7 595.0 L1796.0 579.5 L1791.3 578.9 L1786.4 578.5 L1781.3 578.3 L1776.2 578.2 L1771.0 578.2 L1765.8 578.4 L1760.7 578.7 L1755.6 579.2 L1750.6 579.9 L1745.7 580.7 L1740.9 581.6 L1736.4 582.6 L1732.1 583.8 L1728.0 585.1 L1724.2 586.4 L1720.8 587.9 L1717.6 589.5 L1714.8 591.1 L1712.4 592.8 L1279.4 926.0 L1277.4 927.8 L1275.8 929.6 L1274.5 931.4 L1273.7 933.2 L1273.3 935.0 L1273.4 936.8 L1273.9 938.6 L1274.8 940.4 L1276.1 942.1 L1277.8 943.8 L1279.9 945.4 L1282.4 946.9 L1285.3 948.3 L1288.5 949.6 L1292.1 950.8 L1295.9 951.9 L1300.0 952.8 L1304.4 953.7 L1309.0 954.3 L1426.6 969.9 M1450.7 948.7 L1451.7 948.8 L1452.7 948.7 L1453.7 948.6 L1454.5 948.3 L1455.1 948.0 L1885.3 616.9 L1885.5 616.6 L1885.5 616.2 L1885.2 615.9 L1884.6 615.6 L1883.7 615.5 L1771.9 600.7 L1771.0 600.6 L1769.9 600.6 L1769.0 600.8 L1768.2 601.0 L1767.6 601.4 L1337.4 932.4 L1337.1 932.8 L1337.2 933.2 L1337.5 933.5 L1338.1 933.7 L1339.0 933.9 L1450.7 948.7 M1495.9 759.4 L1552.5 766.9 M1670.2 782.5 L1726.8 790.0 M1332.2 741.9 L1339.0 933.9 M1330.6 740.5 L1337.4 932.4 M1443.9 756.7 L1450.7 948.7 M1448.3 756.0 L1455.1 948.0 M1878.5 425.0 L1885.3 616.9 M1876.9 423.5 L1883.7 615.5 M1765.1 408.7 L1771.9 600.7 M1760.8 409.4 L1767.6 601.4 M1302.2 762.4 L1309.0 954.3 M1419.8 777.9 L1426.6 969.9 M1503.5 764.6 L1510.3 956.6 M1936.5 431.4 L1943.3 623.3 M1906.9 403.1 L1913.7 595.0 M1789.2 387.5 L1796.0 579.5 M1705.6 400.8 L1712.4 592.8 M1272.6 734.1 L1279.4 926.0 M1489.1 567.4 L1495.9 759.4 M1545.7 574.9 L1552.5 766.9 M1663.4 590.5 L1670.2 782.5 M1720.0 598.0 L1726.8 790.0" fill="none" stroke="#42632a" stroke-width="1.5" clip-path="url(#sil)"/>
<path d="M1046.7 728.6 L1164.4 744.1 L1171.2 936.1 L1053.5 920.5 Z" fill="#ffffff" fill-opacity="0.035"/>
<path d="M1073.7 707.7 L1191.4 723.3 L1198.2 915.3 L1080.5 899.7 Z" fill="#ffffff" fill-opacity="0.03"/>
<path d="M1164.4 744.1 L1169.1 744.7 L1174.0 745.1 L1179.1 745.3 L1184.2 745.4 L1189.4 745.4 L1194.5 745.2 L1199.7 744.8 L1204.8 744.3 L1209.8 743.7 L1214.7 742.9 L1219.4 742.0 L1224.0 741.0 L1228.3 739.8 L1232.4 738.5 L1236.1 737.2 L1239.6 735.7 L1242.8 734.1 L1245.6 732.5 L1248.0 730.8 L1681.0 397.5 L1683.0 395.8 L1684.6 394.0 L1685.9 392.2 L1686.7 390.4 L1687.1 388.6 L1687.0 386.7 L1686.5 384.9 L1685.6 383.2 L1684.3 381.5 L1682.6 379.8 L1680.5 378.2 L1678.0 376.7 L1675.1 375.3 L1671.9 374.0 L1668.3 372.8 L1664.5 371.7 L1660.4 370.8 L1656.0 369.9 L1651.4 369.2 L1533.7 353.7 L1529.0 353.1 L1524.1 352.7 L1519.0 352.5 L1513.9 352.4 L1508.7 352.4 L1503.5 352.6 L1498.4 353.0 L1493.3 353.5 L1488.3 354.1 L1483.4 354.9 L1478.7 355.8 L1474.1 356.8 L1469.8 358.0 L1465.7 359.3 L1462.0 360.6 L1458.5 362.1 L1455.3 363.7 L1452.5 365.3 L1450.1 367.0 L1017.1 700.2 L1015.1 702.0 L1013.5 703.8 L1012.2 705.6 L1011.4 707.4 L1011.0 709.2 L1011.1 711.1 L1011.6 712.9 L1012.5 714.6 L1013.8 716.3 L1015.5 718.0 L1017.6 719.6 L1020.1 721.1 L1023.0 722.5 L1026.2 723.8 L1029.8 725.0 L1033.6 726.1 L1037.7 727.0 L1042.1 727.9 L1046.7 728.6 L1164.4 744.1 Z" fill="#000000" fill-opacity="0.008"/>
<path d="M1693.8 578.7 L1693.3 576.9 L1692.4 575.2 L1691.1 573.4 L1689.4 571.8 L1687.3 570.2 L1684.8 568.7 L1681.9 567.3 L1678.7 566.0 L1675.1 564.8 L1671.3 563.7 L1667.2 562.7 L1662.8 561.9 L1658.2 561.2 L1655.7 560.9 L1653.2 560.6 L1650.7 560.2 L1648.2 559.9 L1645.7 559.6 L1643.2 559.2 L1640.7 558.9 L1638.2 558.6 L1635.7 558.2 L1633.2 557.9 L1630.7 557.6 L1628.2 557.2 L1625.7 556.9 L1623.2 556.6 L1620.7 556.2 L1618.2 555.9 L1615.6 555.6 L1613.1 555.3 L1610.6 554.9 L1608.1 554.6 L1605.6 554.3 L1603.1 553.9 L1600.6 553.6 L1598.1 553.3 L1595.6 552.9 L1593.1 552.6 L1590.6 552.3 L1588.1 551.9 L1585.6 551.6 L1583.1 551.3 L1580.6 550.9 L1578.1 550.6 L1575.6 550.3 L1573.1 549.9 L1570.6 549.6 L1568.1 549.3 L1565.6 549.0 L1563.1 548.6 L1560.6 548.3 L1558.1 548.0 L1555.6 547.6 L1553.1 547.3 L1550.6 547.0 L1548.1 546.6 L1545.6 546.3 L1543.0 546.0 L1540.5 545.6 L1535.8 545.1 L1530.9 544.7 L1528.3 544.6 L1525.8 544.4 L1523.3 544.4 L1520.7 544.3 L1518.1 544.4 L1515.5 544.4 L1512.9 544.5 L1510.3 544.6 L1507.8 544.8 L1505.2 544.9 L1502.6 545.2 L1500.1 545.4 L1497.6 545.7 L1495.1 546.1 L1490.2 546.8 L1485.5 547.8 L1480.9 548.8 L1476.6 550.0 L1472.5 551.2 L1468.8 552.6 L1465.3 554.1 L1462.1 555.6 L1459.3 557.3 L1456.9 559.0 L1454.9 560.5 L1452.9 562.0 L1450.9 563.6 L1449.0 565.1 L1447.0 566.6 L1445.0 568.1 L1443.0 569.7 L1441.0 571.2 L1439.0 572.7 L1437.0 574.3 L1435.1 575.8 L1433.1 577.3 L1431.1 578.8 L1429.1 580.4 L1427.1 581.9 L1425.1 583.4 L1423.1 585.0 L1421.2 586.5 L1419.2 588.0 L1417.2 589.5 L1415.2 591.1 L1413.2 592.6 L1411.2 594.1 L1409.2 595.7 L1407.3 597.2 L1405.3 598.7 L1403.3 600.2 L1401.3 601.8 L1399.3 603.3 L1397.3 604.8 L1395.3 606.4 L1393.4 607.9 L1391.4 609.4 L1389.4 610.9 L1387.4 612.5 L1385.4 614.0 L1383.4 615.5 L1381.4 617.1 L1379.4 618.6 L1377.5 620.1 L1375.5 621.6 L1373.5 623.2 L1371.5 624.7 L1369.5 626.2 L1367.5 627.8 L1365.5 629.3 L1363.6 630.8 L1361.6 632.3 L1359.6 633.9 L1357.6 635.4 L1355.6 636.9 L1353.6 638.5 L1351.6 640.0 L1349.7 641.5 L1347.7 643.0 L1345.7 644.6 L1343.7 646.1 L1341.7 647.6 L1339.7 649.2 L1337.7 650.7 L1335.8 652.2 L1333.8 653.7 L1331.8 655.3 L1329.8 656.8 L1327.8 658.3 L1325.8 659.9 L1323.8 661.4 L1321.9 662.9 L1319.9 664.4 L1317.9 666.0 L1315.9 667.5 L1313.9 669.0 L1311.9 670.6 L1309.9 672.1 L1308.0 673.6 L1306.0 675.1 L1304.0 676.7 L1302.0 678.2 L1300.0 679.7 L1298.0 681.3 L1296.0 682.8 L1294.0 684.3 L1292.1 685.8 L1290.1 687.4 L1288.1 688.9 L1286.1 690.4 L1284.1 692.0 L1282.1 693.5 L1280.1 695.0 L1278.2 696.5 L1276.2 698.1 L1274.2 699.6 L1272.2 701.1 L1270.2 702.7 L1268.2 704.2 L1266.2 705.7 L1264.3 707.3 L1262.3 708.8 L1260.3 710.3 L1258.3 711.8 L1256.3 713.4 L1254.3 714.9 L1252.3 716.4 L1250.4 718.0 L1248.4 719.5 L1246.4 721.0 L1244.4 722.5 L1242.4 724.1 L1240.4 725.6 L1238.4 727.1 L1236.5 728.7 L1234.5 730.2 L1232.5 731.7 L1230.5 733.2 L1228.5 734.8 L1226.5 736.3 L1224.5 737.8 L1222.5 739.4 L1220.6 740.9 L1218.6 742.4 L1216.6 743.9 L1214.6 745.5 L1212.6 747.0 L1210.6 748.5 L1208.6 750.1 L1206.7 751.6 L1204.7 753.1 L1202.7 754.6 L1200.7 756.2 L1198.7 757.7 L1196.7 759.2 L1194.7 760.8 L1192.8 762.3 L1190.8 763.8 L1188.8 765.3 L1186.8 766.9 L1184.8 768.4 L1182.8 769.9 L1180.8 771.5 L1178.9 773.0 L1176.9 774.5 L1174.9 776.0 L1172.9 777.6 L1170.9 779.1 L1168.9 780.6 L1166.9 782.2 L1165.0 783.7 L1163.0 785.2 L1161.0 786.7 L1159.0 788.3 L1157.0 789.8 L1155.0 791.3 L1153.0 792.9 L1151.0 794.4 L1149.1 795.9 L1147.1 797.4 L1145.1 799.0 L1143.1 800.5 L1141.1 802.0 L1139.1 803.6 L1137.1 805.1 L1135.2 806.6 L1133.2 808.1 L1131.2 809.7 L1129.2 811.2 L1127.2 812.7 L1125.2 814.3 L1123.2 815.8 L1121.3 817.3 L1119.3 818.8 L1117.3 820.4 L1115.3 821.9 L1113.3 823.4 L1111.3 825.0 L1109.3 826.5 L1107.4 828.0 L1105.4 829.5 L1103.4 831.1 L1101.4 832.6 L1099.4 834.1 L1097.4 835.7 L1095.4 837.2 L1093.5 838.7 L1091.5 840.2 L1089.5 841.8 L1087.5 843.3 L1085.5 844.8 L1083.5 846.4 L1081.5 847.9 L1079.5 849.4 L1077.6 850.9 L1075.6 852.5 L1073.6 854.0 L1071.6 855.5 L1069.6 857.1 L1067.6 858.6 L1065.6 860.1 L1063.7 861.7 L1061.7 863.2 L1059.7 864.7 L1057.7 866.2 L1055.7 867.8 L1053.7 869.3 L1051.7 870.8 L1049.8 872.4 L1047.8 873.9 L1045.8 875.4 L1043.8 876.9 L1041.8 878.5 L1039.8 880.0 L1037.8 881.5 L1035.9 883.1 L1033.9 884.6 L1031.9 886.1 L1029.9 887.6 L1027.9 889.2 L1025.9 890.7 L1023.9 892.2 L1021.9 894.0 L1020.3 895.8 L1019.0 897.6 L1018.2 899.4 L1017.8 901.2 M1195.3 914.9 L1196.2 915.0 L1197.3 914.9 L1198.2 914.8 L1199.0 914.5 L1199.6 914.2 L1201.6 912.7 L1203.6 911.2 L1205.5 909.6 L1207.5 908.1 L1209.5 906.6 L1211.5 905.1 L1213.5 903.5 L1215.5 902.0 L1217.4 900.5 L1219.4 898.9 L1221.4 897.4 L1223.4 895.9 L1225.4 894.4 L1227.4 892.8 L1229.3 891.3 L1231.3 889.8 L1233.3 888.3 L1235.3 886.7 L1237.3 885.2 L1239.2 883.7 L1241.2 882.2 L1243.2 880.6 L1245.2 879.1 L1247.2 877.6 L1249.2 876.1 L1251.1 874.5 L1253.1 873.0 L1255.1 871.5 L1257.1 870.0 L1259.1 868.4 L1261.1 866.9 L1263.0 865.4 L1265.0 863.9 L1267.0 862.3 L1269.0 860.8 L1271.0 859.3 L1272.9 857.8 L1274.9 856.2 L1276.9 854.7 L1278.9 853.2 L1280.9 851.6 L1282.9 850.1 L1284.8 848.6 L1286.8 847.1 L1288.8 845.5 L1290.8 844.0 L1292.8 842.5 L1294.8 841.0 L1296.7 839.4 L1298.7 837.9 L1300.7 836.4 L1302.7 834.9 L1304.7 833.3 L1306.6 831.8 L1308.6 830.3 L1310.6 828.8 L1312.6 827.2 L1314.6 825.7 L1316.6 824.2 L1318.5 822.7 L1320.5 821.1 L1322.5 819.6 L1324.5 818.1 L1326.5 816.6 L1328.4 815.0 L1330.4 813.5 L1332.4 812.0 L1334.4 810.5 L1336.4 808.9 L1338.4 807.4 L1340.3 805.9 L1342.3 804.3 L1344.3 802.8 L1346.3 801.3 L1348.3 799.8 L1350.3 798.2 L1352.2 796.7 L1354.2 795.2 L1356.2 793.7 L1358.2 792.1 L1360.2 790.6 L1362.1 789.1 L1364.1 787.6 L1366.1 786.0 L1368.1 784.5 L1370.1 783.0 L1372.1 781.5 L1374.0 779.9 L1376.0 778.4 L1378.0 776.9 L1380.0 775.4 L1382.0 773.8 L1384.0 772.3 L1385.9 770.8 L1387.9 769.3 L1389.9 767.7 L1391.9 766.2 L1393.9 764.7 L1395.8 763.2 L1397.8 761.6 L1399.8 760.1 L1401.8 758.6 L1403.8 757.1 L1405.8 755.5 L1407.7 754.0 L1409.7 752.5 L1411.7 750.9 L1413.7 749.4 L1415.7 747.9 L1417.7 746.4 L1419.6 744.8 L1421.6 743.3 L1423.6 741.8 L1425.6 740.3 L1427.6 738.7 L1429.5 737.2 L1431.5 735.7 L1433.5 734.2 L1435.5 732.6 L1437.5 731.1 L1439.5 729.6 L1441.4 728.1 L1443.4 726.5 L1445.4 725.0 L1447.4 723.5 L1449.4 722.0 L1451.4 720.4 L1453.3 718.9 L1455.3 717.4 L1457.3 715.9 L1459.3 714.3 L1461.3 712.8 L1463.2 711.3 L1465.2 709.8 L1467.2 708.2 L1469.2 706.7 L1471.2 705.2 L1473.2 703.6 L1475.1 702.1 L1477.1 700.6 L1479.1 699.1 L1481.1 697.5 L1483.1 696.0 L1485.1 694.5 L1487.0 693.0 L1489.0 691.4 L1491.0 689.9 L1493.0 688.4 L1495.0 686.9 L1496.9 685.3 L1498.9 683.8 L1500.9 682.3 L1502.9 680.8 L1504.9 679.2 L1506.9 677.7 L1508.8 676.2 L1510.8 674.7 L1512.8 673.1 L1514.8 671.6 L1516.8 670.1 L1518.7 668.6 L1520.7 667.0 L1522.7 665.5 L1524.7 664.0 L1526.7 662.5 L1528.7 660.9 L1530.6 659.4 L1532.6 657.9 L1534.6 656.3 L1536.6 654.8 L1538.6 653.3 L1540.6 651.8 L1542.5 650.2 L1544.5 648.7 L1546.5 647.2 L1548.5 645.7 L1550.5 644.1 L1552.4 642.6 L1554.4 641.1 L1556.4 639.6 L1558.4 638.0 L1560.4 636.5 L1562.4 635.0 L1564.3 633.5 L1566.3 631.9 L1568.3 630.4 L1570.3 628.9 L1572.3 627.4 L1574.3 625.8 L1576.2 624.3 L1578.2 622.8 L1580.2 621.3 L1582.2 619.7 L1584.2 618.2 L1586.1 616.7 L1588.1 615.2 L1590.1 613.6 L1592.1 612.1 L1594.1 610.6 L1596.1 609.0 L1598.0 607.5 L1600.0 606.0 L1602.0 604.5 L1604.0 602.9 L1606.0 601.4 L1608.0 599.9 L1609.9 598.4 L1611.9 596.8 L1613.9 595.3 L1615.9 593.8 L1617.9 592.3 L1619.8 590.7 L1621.8 589.2 L1623.8 587.7 L1625.8 586.2 L1627.8 584.6 L1629.8 583.1 L1630.0 582.8 L1630.0 582.4 L1629.7 582.1 L1629.1 581.8 L1628.2 581.6 L1625.7 581.3 L1623.3 581.0 L1620.8 580.7 L1618.3 580.3 L1615.8 580.0 L1613.3 579.7 L1610.8 579.3 L1608.4 579.0 L1605.9 578.7 L1603.4 578.4 L1600.9 578.0 L1598.4 577.7 L1595.9 577.4 L1593.4 577.0 L1591.0 576.7 L1588.5 576.4 L1586.0 576.1 L1583.5 575.7 L1581.0 575.4 L1578.5 575.1 L1576.1 574.7 L1573.6 574.4 L1571.1 574.1 L1568.6 573.7 L1566.1 573.4 L1563.6 573.1 L1561.2 572.8 L1558.7 572.4 L1556.2 572.1 L1553.7 571.8 L1551.2 571.4 L1548.7 571.1 L1546.3 570.8 L1543.8 570.5 L1541.3 570.1 L1538.8 569.8 L1536.3 569.5 L1533.8 569.1 L1531.3 568.8 L1528.9 568.5 L1526.4 568.2 L1523.9 567.8 L1521.4 567.5 L1518.9 567.2 L1516.4 566.8 L1515.5 566.8 L1514.4 566.8 L1513.5 567.0 L1512.7 567.2 L1512.1 567.5 L1510.1 569.1 L1508.1 570.6 L1506.2 572.1 L1504.2 573.6 L1502.2 575.2 L1500.2 576.7 L1498.2 578.2 L1496.2 579.7 L1494.3 581.3 L1492.3 582.8 L1490.3 584.3 L1488.3 585.8 L1486.3 587.4 L1484.3 588.9 L1482.4 590.4 L1480.4 592.0 L1478.4 593.5 L1476.4 595.0 L1474.4 596.5 L1472.5 598.1 L1470.5 599.6 L1468.5 601.1 L1466.5 602.6 L1464.5 604.2 L1462.5 605.7 L1460.6 607.2 L1458.6 608.7 L1456.6 610.3 L1454.6 611.8 L1452.6 613.3 L1450.6 614.8 L1448.7 616.4 L1446.7 617.9 L1444.7 619.4 L1442.7 620.9 L1440.7 622.5 L1438.8 624.0 L1436.8 625.5 L1434.8 627.0 L1432.8 628.6 L1430.8 630.1 L1428.8 631.6 L1426.9 633.1 L1424.9 634.7 L1422.9 636.2 L1420.9 637.7 L1418.9 639.3 L1416.9 640.8 L1415.0 642.3 L1413.0 643.8 L1411.0 645.4 L1409.0 646.9 L1407.0 648.4 L1405.1 649.9 L1403.1 651.5 L1401.1 653.0 L1399.1 654.5 L1397.1 656.0 L1395.1 657.6 L1393.2 659.1 L1391.2 660.6 L1389.2 662.1 L1387.2 663.7 L1385.2 665.2 L1383.2 666.7 L1381.3 668.2 L1379.3 669.8 L1377.3 671.3 L1375.3 672.8 L1373.3 674.3 L1371.4 675.9 L1369.4 677.4 L1367.4 678.9 L1365.4 680.4 L1363.4 682.0 L1361.4 683.5 L1359.5 685.0 L1357.5 686.5 L1355.5 688.1 L1353.5 689.6 L1351.5 691.1 L1349.5 692.7 L1347.6 694.2 L1345.6 695.7 L1343.6 697.2 L1341.6 698.8 L1339.6 700.3 L1337.7 701.8 L1335.7 703.3 L1333.7 704.9 L1331.7 706.4 L1329.7 707.9 L1327.7 709.4 L1325.8 711.0 L1323.8 712.5 L1321.8 714.0 L1319.8 715.5 L1317.8 717.1 L1315.9 718.6 L1313.9 720.1 L1311.9 721.6 L1309.9 723.2 L1307.9 724.7 L1305.9 726.2 L1304.0 727.7 L1302.0 729.3 L1300.0 730.8 L1298.0 732.3 L1296.0 733.8 L1294.0 735.4 L1292.1 736.9 L1290.1 738.4 L1288.1 740.0 L1286.1 741.5 L1284.1 743.0 L1282.2 744.5 L1280.2 746.1 L1278.2 747.6 L1276.2 749.1 L1274.2 750.6 L1272.2 752.2 L1270.3 753.7 L1268.3 755.2 L1266.3 756.7 L1264.3 758.3 L1262.3 759.8 L1260.3 761.3 L1258.4 762.8 L1256.4 764.4 L1254.4 765.9 L1252.4 767.4 L1250.4 768.9 L1248.5 770.5 L1246.5 772.0 L1244.5 773.5 L1242.5 775.0 L1240.5 776.6 L1238.5 778.1 L1236.6 779.6 L1234.6 781.1 L1232.6 782.7 L1230.6 784.2 L1228.6 785.7 L1226.6 787.3 L1224.7 788.8 L1222.7 790.3 L1220.7 791.8 L1218.7 793.4 L1216.7 794.9 L1214.8 796.4 L1212.8 797.9 L1210.8 799.5 L1208.8 801.0 L1206.8 802.5 L1204.8 804.0 L1202.9 805.6 L1200.9 807.1 L1198.9 808.6 L1196.9 810.1 L1194.9 811.7 L1192.9 813.2 L1191.0 814.7 L1189.0 816.2 L1187.0 817.8 L1185.0 819.3 L1183.0 820.8 L1181.1 822.3 L1179.1 823.9 L1177.1 825.4 L1175.1 826.9 L1173.1 828.4 L1171.1 830.0 L1169.2 831.5 L1167.2 833.0 L1165.2 834.6 L1163.2 836.1 L1161.2 837.6 L1159.2 839.1 L1157.3 840.7 L1155.3 842.2 L1153.3 843.7 L1151.3 845.2 L1149.3 846.8 L1147.4 848.3 L1145.4 849.8 L1143.4 851.3 L1141.4 852.9 L1139.4 854.4 L1137.4 855.9 L1135.5 857.4 L1133.5 859.0 L1131.5 860.5 L1129.5 862.0 L1127.5 863.5 L1125.6 865.1 L1123.6 866.6 L1121.6 868.1 L1119.6 869.6 L1117.6 871.2 L1115.6 872.7 L1113.7 874.2 L1111.7 875.7 L1109.7 877.3 L1107.7 878.8 L1105.7 880.3 L1103.7 881.8 L1101.8 883.4 L1099.8 884.9 L1097.8 886.4 L1095.8 888.0 L1093.8 889.5 L1091.9 891.0 L1089.9 892.5 L1087.9 894.1 L1085.9 895.6 L1083.9 897.1 L1081.9 898.6 L1081.6 899.0 L1081.7 899.3 L1082.0 899.7 L1082.6 899.9 L1083.5 900.1 L1086.0 900.4 L1088.4 900.8 L1090.9 901.1 L1093.4 901.4 L1095.9 901.7 L1098.4 902.1 L1100.9 902.4 L1103.3 902.7 L1105.8 903.1 L1108.3 903.4 L1110.8 903.7 L1113.3 904.0 L1115.8 904.4 L1118.3 904.7 L1120.7 905.0 L1123.2 905.4 L1125.7 905.7 L1128.2 906.0 L1130.7 906.4 L1133.2 906.7 L1135.6 907.0 L1138.1 907.3 L1140.6 907.7 L1143.1 908.0 L1145.6 908.3 L1148.1 908.7 L1150.5 909.0 L1153.0 909.3 L1155.5 909.6 L1158.0 910.0 L1160.5 910.3 L1163.0 910.6 L1165.4 911.0 L1167.9 911.3 L1170.4 911.6 L1172.9 911.9 L1175.4 912.3 L1177.9 912.6 L1180.3 912.9 L1182.8 913.3 L1185.3 913.6 L1187.8 913.9 L1190.3 914.2 L1192.8 914.6 L1195.3 914.9 M1240.4 725.6 L1243.0 725.9 L1245.6 726.3 L1248.1 726.6 L1250.7 727.0 L1253.3 727.3 L1255.9 727.6 L1258.4 728.0 L1261.0 728.3 L1263.6 728.7 L1266.1 729.0 L1268.7 729.3 L1271.3 729.7 L1273.9 730.0 L1276.4 730.4 L1279.0 730.7 L1281.6 731.0 L1284.2 731.4 L1286.7 731.7 L1289.3 732.1 L1291.9 732.4 L1294.4 732.7 L1297.0 733.1 M1414.7 748.7 L1417.3 749.0 L1419.8 749.3 L1422.4 749.7 L1425.0 750.0 L1427.5 750.4 L1430.1 750.7 L1432.7 751.0 L1435.3 751.4 L1437.8 751.7 L1440.4 752.1 L1443.0 752.4 L1445.5 752.7 L1448.1 753.1 L1450.7 753.4 L1453.3 753.8 L1455.8 754.1 L1458.4 754.4 L1461.0 754.8 L1463.6 755.1 L1466.1 755.5 L1468.7 755.8 L1471.3 756.1 M1077.6 733.4 L1077.7 735.9 L1077.7 738.4 L1077.8 741.0 L1077.9 743.5 L1078.0 746.0 L1078.1 748.5 L1078.2 751.1 L1078.3 753.6 L1078.4 756.1 L1078.5 758.6 L1078.6 761.2 L1078.6 763.7 L1078.7 766.2 L1078.8 768.8 L1078.9 771.3 L1079.0 773.8 L1079.1 776.3 L1079.2 778.9 L1079.3 781.4 L1079.4 783.9 L1079.4 786.4 L1079.5 789.0 L1079.6 791.5 L1079.7 794.0 L1079.8 796.5 L1079.9 799.1 L1080.0 801.6 L1080.1 804.1 L1080.2 806.6 L1080.3 809.2 L1080.3 811.7 L1080.4 814.2 L1080.5 816.7 L1080.6 819.3 L1080.7 821.8 L1080.8 824.3 L1080.9 826.9 L1081.0 829.4 L1081.1 831.9 L1081.1 834.4 L1081.2 837.0 L1081.3 839.5 L1081.4 842.0 L1081.5 844.5 L1081.6 847.1 L1081.7 849.6 L1081.8 852.1 L1081.9 854.6 L1082.0 857.2 L1082.0 859.7 L1082.1 862.2 L1082.2 864.7 L1082.3 867.3 L1082.4 869.8 L1082.5 872.3 L1082.6 874.8 L1082.7 877.4 L1082.8 879.9 L1082.8 882.4 L1082.9 884.9 L1083.0 887.5 L1083.1 890.0 L1083.2 892.5 L1083.3 895.1 L1083.4 897.6 L1083.5 900.1 M1075.2 709.2 L1075.3 711.7 L1075.4 714.2 L1075.5 716.8 L1075.6 719.3 L1075.7 721.8 L1075.8 724.3 L1075.9 726.9 L1075.9 729.4 L1076.0 731.9 L1076.1 734.4 L1076.2 737.0 L1076.3 739.5 L1076.4 742.0 L1076.5 744.5 L1076.6 747.1 L1076.7 749.6 L1076.8 752.1 L1076.8 754.7 L1076.9 757.2 L1077.0 759.7 L1077.1 762.2 L1077.2 764.8 L1077.3 767.3 L1077.4 769.8 L1077.5 772.3 L1077.6 774.9 L1077.6 777.4 L1077.7 779.9 L1077.8 782.4 L1077.9 785.0 L1078.0 787.5 L1078.1 790.0 L1078.2 792.5 L1078.3 795.1 L1078.4 797.6 L1078.5 800.1 L1078.5 802.6 L1078.6 805.2 L1078.7 807.7 L1078.8 810.2 L1078.9 812.7 L1079.0 815.3 L1079.1 817.8 L1079.2 820.3 L1079.3 822.9 L1079.3 825.4 L1079.4 827.9 L1079.5 830.4 L1079.6 833.0 L1079.7 835.5 L1079.8 838.0 L1079.9 840.5 L1080.0 843.1 L1080.1 845.6 L1080.2 848.1 L1080.2 850.6 L1080.3 853.2 L1080.4 855.7 L1080.5 858.2 L1080.6 860.7 L1080.7 863.3 L1080.8 865.8 L1080.9 868.3 L1081.0 870.8 L1081.0 873.4 L1081.1 875.9 L1081.2 878.4 L1081.3 881.0 L1081.4 883.5 L1081.5 886.0 L1081.6 888.5 L1081.7 891.1 L1081.8 893.6 L1081.9 896.1 L1081.9 898.6 M1189.3 745.7 L1189.3 748.2 L1189.4 750.7 L1189.5 753.2 L1189.6 755.8 L1189.7 758.3 L1189.8 760.8 L1189.9 763.3 L1190.0 765.9 L1190.1 768.4 L1190.2 770.9 L1190.2 773.4 L1190.3 776.0 L1190.4 778.5 L1190.5 781.0 L1190.6 783.5 L1190.7 786.1 L1190.8 788.6 L1190.9 791.1 L1191.0 793.7 L1191.0 796.2 L1191.1 798.7 L1191.2 801.2 L1191.3 803.8 L1191.4 806.3 L1191.5 808.8 L1191.6 811.3 L1191.7 813.9 L1191.8 816.4 L1191.9 818.9 L1191.9 821.4 L1192.0 824.0 L1192.1 826.5 L1192.2 829.0 L1192.3 831.5 L1192.4 834.1 L1192.5 836.6 L1192.6 839.1 L1192.7 841.6 L1192.7 844.2 L1192.8 846.7 L1192.9 849.2 L1193.0 851.7 L1193.1 854.3 L1193.2 856.8 L1193.3 859.3 L1193.4 861.9 L1193.5 864.4 L1193.6 866.9 L1193.6 869.4 L1193.7 872.0 L1193.8 874.5 L1193.9 877.0 L1194.0 879.5 L1194.1 882.1 L1194.2 884.6 L1194.3 887.1 L1194.4 889.6 L1194.4 892.2 L1194.5 894.7 L1194.6 897.2 L1194.7 899.7 L1194.8 902.3 L1194.9 904.8 L1195.0 907.3 L1195.1 909.8 L1195.2 912.4 L1195.3 914.9 M1193.6 745.0 L1193.7 747.5 L1193.8 750.0 L1193.9 752.5 L1194.0 755.1 L1194.1 757.6 L1194.1 760.1 L1194.2 762.6 L1194.3 765.2 L1194.4 767.7 L1194.5 770.2 L1194.6 772.8 L1194.7 775.3 L1194.8 777.8 L1194.9 780.3 L1194.9 782.9 L1195.0 785.4 L1195.1 787.9 L1195.2 790.4 L1195.3 793.0 L1195.4 795.5 L1195.5 798.0 L1195.6 800.5 L1195.7 803.1 L1195.8 805.6 L1195.8 808.1 L1195.9 810.6 L1196.0 813.2 L1196.1 815.7 L1196.2 818.2 L1196.3 820.7 L1196.4 823.3 L1196.5 825.8 L1196.6 828.3 L1196.6 830.8 L1196.7 833.4 L1196.8 835.9 L1196.9 838.4 L1197.0 841.0 L1197.1 843.5 L1197.2 846.0 L1197.3 848.5 L1197.4 851.1 L1197.5 853.6 L1197.5 856.1 L1197.6 858.6 L1197.7 861.2 L1197.8 863.7 L1197.9 866.2 L1198.0 868.7 L1198.1 871.3 L1198.2 873.8 L1198.3 876.3 L1198.3 878.8 L1198.4 881.4 L1198.5 883.9 L1198.6 886.4 L1198.7 888.9 L1198.8 891.5 L1198.9 894.0 L1199.0 896.5 L1199.1 899.1 L1199.2 901.6 L1199.2 904.1 L1199.3 906.6 L1199.4 909.2 L1199.5 911.7 L1199.6 914.2 M1624.7 441.7 L1624.8 444.2 L1624.9 446.7 L1625.0 449.2 L1625.1 451.8 L1625.2 454.3 L1625.3 456.8 L1625.4 459.3 L1625.5 461.9 L1625.6 464.4 L1625.6 466.9 L1625.7 469.4 L1625.8 472.0 L1625.9 474.5 L1626.0 477.0 L1626.1 479.5 L1626.2 482.1 L1626.3 484.6 L1626.4 487.1 L1626.4 489.6 L1626.5 492.2 L1626.6 494.7 L1626.7 497.2 L1626.8 499.8 L1626.9 502.3 L1627.0 504.8 L1627.1 507.3 L1627.2 509.9 L1627.3 512.4 L1627.3 514.9 L1627.4 517.4 L1627.5 520.0 L1627.6 522.5 L1627.7 525.0 L1627.8 527.5 L1627.9 530.1 L1628.0 532.6 L1628.1 535.1 L1628.1 537.6 L1628.2 540.2 L1628.3 542.7 L1628.4 545.2 L1628.5 547.7 L1628.6 550.3 L1628.7 552.8 L1628.8 555.3 L1628.9 557.9 L1629.0 560.4 L1629.0 562.9 L1629.1 565.4 L1629.2 568.0 L1629.3 570.5 L1629.4 573.0 L1629.5 575.5 L1629.6 578.1 L1629.7 580.6 L1629.8 583.1 M1621.5 392.2 L1621.6 394.7 L1621.7 397.2 L1621.8 399.8 L1621.9 402.3 L1622.0 404.8 L1622.0 407.3 L1622.1 409.9 L1622.2 412.4 L1622.3 414.9 L1622.4 417.5 L1622.5 420.0 L1622.6 422.5 L1622.7 425.0 L1622.8 427.6 L1622.9 430.1 L1622.9 432.6 L1623.0 435.1 L1623.1 437.7 L1623.2 440.2 L1623.3 442.7 L1623.4 445.2 L1623.5 447.8 L1623.6 450.3 L1623.7 452.8 L1623.7 455.3 L1623.8 457.9 L1623.9 460.4 L1624.0 462.9 L1624.1 465.4 L1624.2 468.0 L1624.3 470.5 L1624.4 473.0 L1624.5 475.5 L1624.6 478.1 L1624.6 480.6 L1624.7 483.1 L1624.8 485.7 L1624.9 488.2 L1625.0 490.7 L1625.1 493.2 L1625.2 495.8 L1625.3 498.3 L1625.4 500.8 L1625.4 503.3 L1625.5 505.9 L1625.6 508.4 L1625.7 510.9 L1625.8 513.4 L1625.9 516.0 L1626.0 518.5 L1626.1 521.0 L1626.2 523.5 L1626.3 526.1 L1626.3 528.6 L1626.4 531.1 L1626.5 533.6 L1626.6 536.2 L1626.7 538.7 L1626.8 541.2 L1626.9 543.8 L1627.0 546.3 L1627.1 548.8 L1627.1 551.3 L1627.2 553.9 L1627.3 556.4 L1627.4 558.9 L1627.5 561.4 L1627.6 564.0 L1627.7 566.5 L1627.8 569.0 L1627.9 571.5 L1628.0 574.1 L1628.0 576.6 L1628.1 579.1 L1628.2 581.6 M1513.2 475.9 L1513.3 478.4 L1513.4 481.0 L1513.5 483.5 L1513.6 486.0 L1513.7 488.5 L1513.8 491.1 L1513.8 493.6 L1513.9 496.1 L1514.0 498.6 L1514.1 501.2 L1514.2 503.7 L1514.3 506.2 L1514.4 508.7 L1514.5 511.3 L1514.6 513.8 L1514.7 516.3 L1514.7 518.9 L1514.8 521.4 L1514.9 523.9 L1515.0 526.4 L1515.1 529.0 L1515.2 531.5 L1515.3 534.0 L1515.4 536.5 L1515.5 539.1 L1515.5 541.6 L1515.6 544.1 L1515.7 546.6 L1515.8 549.2 L1515.9 551.7 L1516.0 554.2 L1516.1 556.7 L1516.2 559.3 L1516.3 561.8 L1516.4 564.3 L1516.4 566.8 M1509.0 479.1 L1509.1 481.7 L1509.1 484.2 L1509.2 486.7 L1509.3 489.2 L1509.4 491.8 L1509.5 494.3 L1509.6 496.8 L1509.7 499.3 L1509.8 501.9 L1509.9 504.4 L1510.0 506.9 L1510.0 509.4 L1510.1 512.0 L1510.2 514.5 L1510.3 517.0 L1510.4 519.5 L1510.5 522.1 L1510.6 524.6 L1510.7 527.1 L1510.8 529.6 L1510.8 532.2 L1510.9 534.7 L1511.0 537.2 L1511.1 539.8 L1511.2 542.3 L1511.3 544.8 L1511.4 547.3 L1511.5 549.9 L1511.6 552.4 L1511.7 554.9 L1511.7 557.4 L1511.8 560.0 L1511.9 562.5 L1512.0 565.0 L1512.1 567.5 M1653.2 419.8 L1653.3 422.3 L1653.4 424.8 L1653.5 427.3 L1653.6 429.9 L1653.6 432.4 L1653.7 434.9 L1653.8 437.4 L1653.9 440.0 L1654.0 442.5 L1654.1 445.0 L1654.2 447.5 L1654.3 450.1 L1654.4 452.6 L1654.4 455.1 L1654.5 457.6 L1654.6 460.2 L1654.7 462.7 L1654.8 465.2 L1654.9 467.8 L1655.0 470.3 L1655.1 472.8 L1655.2 475.3 L1655.3 477.9 L1655.3 480.4 L1655.4 482.9 L1655.5 485.4 L1655.6 488.0 L1655.7 490.5 L1655.8 493.0 L1655.9 495.5 L1656.0 498.1 L1656.1 500.6 L1656.1 503.1 L1656.2 505.6 L1656.3 508.2 L1656.4 510.7 L1656.5 513.2 L1656.6 515.7 L1656.7 518.3 L1656.8 520.8 L1656.9 523.3 L1657.0 525.9 L1657.0 528.4 L1657.1 530.9 L1657.2 533.4 L1657.3 536.0 L1657.4 538.5 L1657.5 541.0 L1657.6 543.5 L1657.7 546.1 L1657.8 548.6 L1657.8 551.1 L1657.9 553.6 L1658.0 556.2 L1658.1 558.7 L1658.2 561.2 M1534.6 378.9 L1534.7 381.5 L1534.8 384.0 L1534.9 386.5 L1535.0 389.0 L1535.1 391.6 L1535.2 394.1 L1535.3 396.6 L1535.4 399.1 L1535.4 401.7 L1535.5 404.2 L1535.6 406.7 L1535.7 409.2 L1535.8 411.8 L1535.9 414.3 L1536.0 416.8 L1536.1 419.3 L1536.2 421.9 L1536.3 424.4 L1536.3 426.9 L1536.4 429.4 L1536.5 432.0 L1536.6 434.5 L1536.7 437.0 L1536.8 439.6 L1536.9 442.1 L1537.0 444.6 L1537.1 447.1 L1537.1 449.7 L1537.2 452.2 L1537.3 454.7 L1537.4 457.2 L1537.5 459.8 L1537.6 462.3 L1537.7 464.8 L1537.8 467.3 L1537.9 469.9 L1538.0 472.4 L1538.0 474.9 L1538.1 477.4 L1538.2 480.0 L1538.3 482.5 L1538.4 485.0 L1538.5 487.5 L1538.6 490.1 L1538.7 492.6 L1538.8 495.1 L1538.8 497.6 L1538.9 500.2 L1539.0 502.7 L1539.1 505.2 L1539.2 507.8 L1539.3 510.3 L1539.4 512.8 L1539.5 515.3 L1539.6 517.9 L1539.7 520.4 L1539.7 522.9 L1539.8 525.4 L1539.9 528.0 L1540.0 530.5 L1540.1 533.0 L1540.2 535.5 L1540.3 538.1 L1540.4 540.6 L1540.5 543.1 L1540.5 545.6 M1451.9 417.5 L1452.0 420.0 L1452.1 422.6 L1452.2 425.1 L1452.3 427.6 L1452.3 430.1 L1452.4 432.7 L1452.5 435.2 L1452.6 437.7 L1452.7 440.2 L1452.8 442.8 L1452.9 445.3 L1453.0 447.8 L1453.1 450.3 L1453.1 452.9 L1453.2 455.4 L1453.3 457.9 L1453.4 460.5 L1453.5 463.0 L1453.6 465.5 L1453.7 468.0 L1453.8 470.6 L1453.9 473.1 L1454.0 475.6 L1454.0 478.1 L1454.1 480.7 L1454.2 483.2 L1454.3 485.7 L1454.4 488.2 L1454.5 490.8 L1454.6 493.3 L1454.7 495.8 L1454.8 498.3 L1454.8 500.9 L1454.9 503.4 L1455.0 505.9 L1455.1 508.4 L1455.2 511.0 L1455.3 513.5 L1455.4 516.0 L1455.5 518.6 L1455.6 521.1 L1455.7 523.6 L1455.7 526.1 L1455.8 528.7 L1455.9 531.2 L1456.0 533.7 L1456.1 536.2 L1456.2 538.8 L1456.3 541.3 L1456.4 543.8 L1456.5 546.3 L1456.5 548.9 L1456.6 551.4 L1456.7 553.9 L1456.8 556.4 L1456.9 559.0 M1017.9 720.5 L1017.9 723.0 L1018.0 725.5 L1018.1 728.0 L1018.2 730.6 L1018.3 733.1 L1018.4 735.6 L1018.5 738.1 L1018.6 740.7 L1018.7 743.2 L1018.7 745.7 L1018.8 748.2 L1018.9 750.8 L1019.0 753.3 L1019.1 755.8 L1019.2 758.3 L1019.3 760.9 L1019.4 763.4 L1019.5 765.9 L1019.6 768.5 L1019.6 771.0 L1019.7 773.5 L1019.8 776.0 L1019.9 778.6 L1020.0 781.1 L1020.1 783.6 L1020.2 786.1 L1020.3 788.7 L1020.4 791.2 L1020.4 793.7 L1020.5 796.2 L1020.6 798.8 L1020.7 801.3 L1020.8 803.8 L1020.9 806.3 L1021.0 808.9 L1021.1 811.4 L1021.2 813.9 L1021.3 816.4 L1021.3 819.0 L1021.4 821.5 L1021.5 824.0 L1021.6 826.5 L1021.7 829.1 L1021.8 831.6 L1021.9 834.1 L1022.0 836.7 L1022.1 839.2 L1022.1 841.7 L1022.2 844.2 L1022.3 846.8 L1022.4 849.3 L1022.5 851.8 L1022.6 854.3 L1022.7 856.9 L1022.8 859.4 L1022.9 861.9 L1023.0 864.4 L1023.0 867.0 L1023.1 869.5 L1023.2 872.0 L1023.3 874.5 L1023.4 877.1 L1023.5 879.6 L1023.6 882.1 L1023.7 884.6 L1023.8 887.2 L1023.8 889.7 L1023.9 892.2 M1235.4 584.1 L1235.5 586.7 L1235.6 589.2 L1235.7 591.7 L1235.8 594.2 L1235.9 596.8 L1235.9 599.3 L1236.0 601.8 L1236.1 604.3 L1236.2 606.9 L1236.3 609.4 L1236.4 611.9 L1236.5 614.5 L1236.6 617.0 L1236.7 619.5 L1236.8 622.0 L1236.8 624.6 L1236.9 627.1 L1237.0 629.6 L1237.1 632.1 L1237.2 634.7 L1237.3 637.2 L1237.4 639.7 L1237.5 642.2 L1237.6 644.8 L1237.6 647.3 L1237.7 649.8 L1237.8 652.3 L1237.9 654.9 L1238.0 657.4 L1238.1 659.9 L1238.2 662.4 L1238.3 665.0 L1238.4 667.5 L1238.5 670.0 L1238.5 672.5 L1238.6 675.1 L1238.7 677.6 L1238.8 680.1 L1238.9 682.7 L1239.0 685.2 L1239.1 687.7 L1239.2 690.2 L1239.3 692.8 L1239.3 695.3 L1239.4 697.8 L1239.5 700.3 L1239.6 702.9 L1239.7 705.4 L1239.8 707.9 L1239.9 710.4 L1240.0 713.0 L1240.1 715.5 L1240.2 718.0 L1240.2 720.5 L1240.3 723.1 L1240.4 725.6 M1293.9 644.7 L1294.0 647.2 L1294.1 649.7 L1294.2 652.3 L1294.2 654.8 L1294.3 657.3 L1294.4 659.8 L1294.5 662.4 L1294.6 664.9 L1294.7 667.4 L1294.8 669.9 L1294.9 672.5 L1295.0 675.0 L1295.1 677.5 L1295.1 680.0 L1295.2 682.6 L1295.3 685.1 L1295.4 687.6 L1295.5 690.1 L1295.6 692.7 L1295.7 695.2 L1295.8 697.7 L1295.9 700.2 L1295.9 702.8 L1296.0 705.3 L1296.1 707.8 L1296.2 710.4 L1296.3 712.9 L1296.4 715.4 L1296.5 717.9 L1296.6 720.5 L1296.7 723.0 L1296.8 725.5 L1296.8 728.0 L1296.9 730.6 L1297.0 733.1 M1409.7 607.2 L1409.8 609.7 L1409.8 612.3 L1409.9 614.8 L1410.0 617.3 L1410.1 619.8 L1410.2 622.4 L1410.3 624.9 L1410.4 627.4 L1410.5 629.9 L1410.6 632.5 L1410.7 635.0 L1410.7 637.5 L1410.8 640.0 L1410.9 642.6 L1411.0 645.1 L1411.1 647.6 L1411.2 650.1 L1411.3 652.7 L1411.4 655.2 L1411.5 657.7 L1411.5 660.2 L1411.6 662.8 L1411.7 665.3 L1411.8 667.8 L1411.9 670.4 L1412.0 672.9 L1412.1 675.4 L1412.2 677.9 L1412.3 680.5 L1412.4 683.0 L1412.4 685.5 L1412.5 688.0 L1412.6 690.6 L1412.7 693.1 L1412.8 695.6 L1412.9 698.1 L1413.0 700.7 L1413.1 703.2 L1413.2 705.7 L1413.2 708.2 L1413.3 710.8 L1413.4 713.3 L1413.5 715.8 L1413.6 718.3 L1413.7 720.9 L1413.8 723.4 L1413.9 725.9 L1414.0 728.5 L1414.1 731.0 L1414.1 733.5 L1414.2 736.0 L1414.3 738.6 L1414.4 741.1 L1414.5 743.6 L1414.6 746.1 L1414.7 748.7" fill="none" stroke="#9cc063" stroke-width="1.1"/>
<path d="M1164.4 744.1 L1169.1 744.7 L1174.0 745.1 L1176.6 745.2 L1179.1 745.3 L1181.6 745.4 L1184.2 745.4 L1186.8 745.4 L1189.4 745.4 L1192.0 745.3 L1194.5 745.2 L1197.1 745.0 L1199.7 744.8 L1202.3 744.6 L1204.8 744.3 L1207.3 744.0 L1209.8 743.7 L1214.7 742.9 L1219.4 742.0 L1224.0 741.0 L1228.3 739.8 L1232.4 738.5 L1236.1 737.2 L1239.6 735.7 L1242.8 734.1 L1245.6 732.5 L1248.0 730.8 L1250.0 729.3 L1252.0 727.7 L1253.9 726.2 L1255.9 724.7 L1257.9 723.2 L1259.9 721.6 L1261.9 720.1 L1263.9 718.6 L1265.9 717.0 L1267.9 715.5 L1269.8 714.0 L1271.8 712.5 L1273.8 710.9 L1275.8 709.4 L1277.8 707.9 L1279.8 706.3 L1281.8 704.8 L1283.7 703.3 L1285.7 701.8 L1287.7 700.2 L1289.7 698.7 L1291.7 697.2 L1293.7 695.6 L1295.7 694.1 L1297.6 692.6 L1299.6 691.1 L1301.6 689.5 L1303.6 688.0 L1305.6 686.5 L1307.6 684.9 L1309.6 683.4 L1311.5 681.9 L1313.5 680.4 L1315.5 678.8 L1317.5 677.3 L1319.5 675.8 L1321.5 674.2 L1323.5 672.7 L1325.4 671.2 L1327.4 669.7 L1329.4 668.1 L1331.4 666.6 L1333.4 665.1 L1335.4 663.5 L1337.4 662.0 L1339.3 660.5 L1341.3 659.0 L1343.3 657.4 L1345.3 655.9 L1347.3 654.4 L1349.3 652.8 L1351.3 651.3 L1353.3 649.8 L1355.2 648.3 L1357.2 646.7 L1359.2 645.2 L1361.2 643.7 L1363.2 642.1 L1365.2 640.6 L1367.2 639.1 L1369.1 637.6 L1371.1 636.0 L1373.1 634.5 L1375.1 633.0 L1377.1 631.4 L1379.1 629.9 L1381.1 628.4 L1383.0 626.9 L1385.0 625.3 L1387.0 623.8 L1389.0 622.3 L1391.0 620.7 L1393.0 619.2 L1395.0 617.7 L1396.9 616.2 L1398.9 614.6 L1400.9 613.1 L1402.9 611.6 L1404.9 610.0 L1406.9 608.5 L1408.9 607.0 L1410.8 605.4 L1412.8 603.9 L1414.8 602.4 L1416.8 600.9 L1418.8 599.3 L1420.8 597.8 L1422.8 596.3 L1424.8 594.7 L1426.7 593.2 L1428.7 591.7 L1430.7 590.2 L1432.7 588.6 L1434.7 587.1 L1436.7 585.6 L1438.7 584.0 L1440.6 582.5 L1442.6 581.0 L1444.6 579.5 L1446.6 577.9 L1448.6 576.4 L1450.6 574.9 L1452.6 573.3 L1454.5 571.8 L1456.5 570.3 L1458.5 568.8 L1460.5 567.2 L1462.5 565.7 L1464.5 564.2 L1466.5 562.6 L1468.4 561.1 L1470.4 559.6 L1472.4 558.1 L1474.4 556.5 L1476.4 555.0 L1478.4 553.5 L1480.4 551.9 L1482.3 550.4 L1484.3 548.9 L1486.3 547.4 L1488.3 545.8 L1490.3 544.3 L1492.3 542.8 L1494.3 541.2 L1496.3 539.7 L1498.2 538.2 L1500.2 536.7 L1502.2 535.1 L1504.2 533.6 L1506.2 532.1 L1508.2 530.5 L1510.2 529.0 L1512.1 527.5 L1514.1 526.0 L1516.1 524.4 L1518.1 522.9 L1520.1 521.4 L1522.1 519.8 L1524.1 518.3 L1526.0 516.8 L1528.0 515.3 L1530.0 513.7 L1532.0 512.2 L1534.0 510.7 L1536.0 509.1 L1538.0 507.6 L1539.9 506.1 L1541.9 504.6 L1543.9 503.0 L1545.9 501.5 L1547.9 500.0 L1549.9 498.4 L1551.9 496.9 L1553.8 495.4 L1555.8 493.9 L1557.8 492.3 L1559.8 490.8 L1561.8 489.3 L1563.8 487.7 L1565.8 486.2 L1567.8 484.7 L1569.7 483.2 L1571.7 481.6 L1573.7 480.1 L1575.7 478.6 L1577.7 477.0 L1579.7 475.5 L1581.7 474.0 L1583.6 472.5 L1585.6 470.9 L1587.6 469.4 L1589.6 467.9 L1591.6 466.3 L1593.6 464.8 L1595.6 463.3 L1597.5 461.8 L1599.5 460.2 L1601.5 458.7 L1603.5 457.2 L1605.5 455.6 L1607.5 454.1 L1609.5 452.6 L1611.4 451.0 L1613.4 449.5 L1615.4 448.0 L1617.4 446.5 L1619.4 444.9 L1621.4 443.4 L1623.4 441.9 L1625.3 440.3 L1627.3 438.8 L1629.3 437.3 L1631.3 435.8 L1633.3 434.2 L1635.3 432.7 L1637.3 431.2 L1639.2 429.6 L1641.2 428.1 L1643.2 426.6 L1645.2 425.1 L1647.2 423.5 L1649.2 422.0 L1651.2 420.5 L1653.2 418.9 L1655.1 417.4 L1657.1 415.9 L1659.1 414.4 L1661.1 412.8 L1663.1 411.3 L1665.1 409.8 L1667.1 408.2 L1669.0 406.7 L1671.0 405.2 L1673.0 403.7 L1675.0 402.1 L1677.0 400.6 L1679.0 399.1 L1681.0 397.5 L1683.0 395.8 L1684.6 394.0 L1685.9 392.2 L1686.7 390.4 L1687.1 388.6 L1687.0 386.7 L1686.5 384.9 L1685.6 383.2 L1684.3 381.5 L1682.6 379.8 L1680.5 378.2 L1678.0 376.7 L1675.1 375.3 L1671.9 374.0 L1668.3 372.8 L1664.5 371.7 L1660.4 370.8 L1656.0 369.9 L1651.4 369.2 L1648.9 368.9 L1646.4 368.6 L1643.9 368.2 L1641.4 367.9 L1638.9 367.6 L1636.4 367.3 L1633.9 366.9 L1631.4 366.6 L1628.9 366.3 L1626.4 365.9 L1623.9 365.6 L1621.4 365.3 L1618.9 364.9 L1616.4 364.6 L1613.9 364.3 L1611.4 363.9 L1608.8 363.6 L1606.3 363.3 L1603.8 362.9 L1601.3 362.6 L1598.8 362.3 L1596.3 362.0 L1593.8 361.6 L1591.3 361.3 L1588.8 361.0 L1586.3 360.6 L1583.8 360.3 L1581.3 360.0 L1578.8 359.6 L1576.3 359.3 L1573.8 359.0 L1571.3 358.6 L1568.8 358.3 L1566.3 358.0 L1563.8 357.6 L1561.3 357.3 L1558.8 357.0 L1556.3 356.6 L1553.8 356.3 L1551.3 356.0 L1548.8 355.7 L1546.3 355.3 L1543.8 355.0 L1541.3 354.7 L1538.8 354.3 L1536.2 354.0 L1533.7 353.7 L1529.0 353.1 L1524.1 352.7 L1521.5 352.6 L1519.0 352.5 L1516.5 352.4 L1513.9 352.4 L1511.3 352.4 L1508.7 352.4 L1506.1 352.5 L1503.5 352.6 L1501.0 352.8 L1498.4 353.0 L1495.8 353.2 L1493.3 353.5 L1490.8 353.8 L1488.3 354.1 L1483.4 354.9 L1478.7 355.8 L1474.1 356.8 L1469.8 358.0 L1465.7 359.3 L1462.0 360.6 L1458.5 362.1 L1455.3 363.7 L1452.5 365.3 L1450.1 367.0 L1448.1 368.5 L1446.1 370.0 L1444.1 371.6 L1442.2 373.1 L1440.2 374.6 L1438.2 376.2 L1436.2 377.7 L1434.2 379.2 L1432.2 380.7 L1430.2 382.3 L1428.3 383.8 L1426.3 385.3 L1424.3 386.9 L1422.3 388.4 L1420.3 389.9 L1418.3 391.5 L1416.3 393.0 L1414.4 394.5 L1412.4 396.0 L1410.4 397.6 L1408.4 399.1 L1406.4 400.6 L1404.4 402.2 L1402.4 403.7 L1400.5 405.2 L1398.5 406.7 L1396.5 408.3 L1394.5 409.8 L1392.5 411.3 L1390.5 412.9 L1388.5 414.4 L1386.6 415.9 L1384.6 417.4 L1382.6 419.0 L1380.6 420.5 L1378.6 422.0 L1376.6 423.6 L1374.6 425.1 L1372.6 426.6 L1370.7 428.1 L1368.7 429.7 L1366.7 431.2 L1364.7 432.7 L1362.7 434.3 L1360.7 435.8 L1358.7 437.3 L1356.8 438.8 L1354.8 440.4 L1352.8 441.9 L1350.8 443.4 L1348.8 445.0 L1346.8 446.5 L1344.8 448.0 L1342.9 449.5 L1340.9 451.1 L1338.9 452.6 L1336.9 454.1 L1334.9 455.7 L1332.9 457.2 L1330.9 458.7 L1329.0 460.2 L1327.0 461.8 L1325.0 463.3 L1323.0 464.8 L1321.0 466.4 L1319.0 467.9 L1317.0 469.4 L1315.1 470.9 L1313.1 472.5 L1311.1 474.0 L1309.1 475.5 L1307.1 477.1 L1305.1 478.6 L1303.1 480.1 L1301.1 481.6 L1299.2 483.2 L1297.2 484.7 L1295.2 486.2 L1293.2 487.8 L1291.2 489.3 L1289.2 490.8 L1287.2 492.3 L1285.3 493.9 L1283.3 495.4 L1281.3 496.9 L1279.3 498.5 L1277.3 500.0 L1275.3 501.5 L1273.3 503.0 L1271.4 504.6 L1269.4 506.1 L1267.4 507.6 L1265.4 509.2 L1263.4 510.7 L1261.4 512.2 L1259.4 513.7 L1257.5 515.3 L1255.5 516.8 L1253.5 518.3 L1251.5 519.9 L1249.5 521.4 L1247.5 522.9 L1245.5 524.4 L1243.6 526.0 L1241.6 527.5 L1239.6 529.0 L1237.6 530.6 L1235.6 532.1 L1233.6 533.6 L1231.6 535.1 L1229.7 536.7 L1227.7 538.2 L1225.7 539.7 L1223.7 541.3 L1221.7 542.8 L1219.7 544.3 L1217.7 545.8 L1215.7 547.4 L1213.8 548.9 L1211.8 550.4 L1209.8 552.0 L1207.8 553.5 L1205.8 555.0 L1203.8 556.6 L1201.8 558.1 L1199.9 559.6 L1197.9 561.1 L1195.9 562.7 L1193.9 564.2 L1191.9 565.7 L1189.9 567.3 L1187.9 568.8 L1186.0 570.3 L1184.0 571.8 L1182.0 573.4 L1180.0 574.9 L1178.0 576.4 L1176.0 578.0 L1174.0 579.5 L1172.1 581.0 L1170.1 582.5 L1168.1 584.1 L1166.1 585.6 L1164.1 587.1 L1162.1 588.7 L1160.1 590.2 L1158.2 591.7 L1156.2 593.2 L1154.2 594.8 L1152.2 596.3 L1150.2 597.8 L1148.2 599.4 L1146.2 600.9 L1144.2 602.4 L1142.3 603.9 L1140.3 605.5 L1138.3 607.0 L1136.3 608.5 L1134.3 610.1 L1132.3 611.6 L1130.3 613.1 L1128.4 614.6 L1126.4 616.2 L1124.4 617.7 L1122.4 619.2 L1120.4 620.8 L1118.4 622.3 L1116.4 623.8 L1114.5 625.3 L1112.5 626.9 L1110.5 628.4 L1108.5 629.9 L1106.5 631.5 L1104.5 633.0 L1102.5 634.5 L1100.6 636.0 L1098.6 637.6 L1096.6 639.1 L1094.6 640.6 L1092.6 642.2 L1090.6 643.7 L1088.6 645.2 L1086.7 646.7 L1084.7 648.3 L1082.7 649.8 L1080.7 651.3 L1078.7 652.9 L1076.7 654.4 L1074.7 655.9 L1072.7 657.4 L1070.8 659.0 L1068.8 660.5 L1066.8 662.0 L1064.8 663.6 L1062.8 665.1 L1060.8 666.6 L1058.8 668.1 L1056.9 669.7 L1054.9 671.2 L1052.9 672.7 L1050.9 674.3 L1048.9 675.8 L1046.9 677.3 L1044.9 678.8 L1043.0 680.4 L1041.0 681.9 L1039.0 683.4 L1037.0 685.0 L1035.0 686.5 L1033.0 688.0 L1031.0 689.5 L1029.1 691.1 L1027.1 692.6 L1025.1 694.1 L1023.1 695.7 L1021.1 697.2 L1019.1 698.7 L1017.1 700.2 L1015.1 702.0 L1013.5 703.8 L1012.2 705.6 L1011.4 707.4 L1011.0 709.2 L1011.1 711.1 L1011.6 712.9 L1012.5 714.6 L1013.8 716.3 L1015.5 718.0 L1017.6 719.6 L1020.1 721.1 L1023.0 722.5 L1026.2 723.8 L1029.8 725.0 L1033.6 726.1 L1037.7 727.0 L1042.1 727.9 L1046.7 728.6 L1049.2 728.9 L1051.7 729.2 L1054.2 729.5 L1056.7 729.9 L1059.2 730.2 L1061.7 730.5 L1064.2 730.9 L1066.7 731.2 L1069.2 731.5 L1071.7 731.9 L1074.2 732.2 L1076.7 732.5 L1079.2 732.9 L1081.7 733.2 L1084.2 733.5 L1086.7 733.9 L1089.2 734.2 L1091.8 734.5 L1094.3 734.8 L1096.8 735.2 L1099.3 735.5 L1101.8 735.8 L1104.3 736.2 L1106.8 736.5 L1109.3 736.8 L1111.8 737.2 L1114.3 737.5 L1116.8 737.8 L1119.3 738.2 L1121.8 738.5 L1124.3 738.8 L1126.8 739.2 L1129.3 739.5 L1131.8 739.8 L1134.3 740.2 L1136.8 740.5 L1139.3 740.8 L1141.8 741.1 L1144.3 741.5 L1146.8 741.8 L1149.3 742.1 L1151.8 742.5 L1154.3 742.8 L1156.8 743.1 L1159.3 743.5 L1161.8 743.8 L1164.4 744.1 M1188.5 722.9 L1189.4 723.0 L1190.4 722.9 L1191.4 722.8 L1192.2 722.5 L1192.8 722.2 L1194.8 720.7 L1196.8 719.2 L1198.7 717.7 L1200.7 716.1 L1202.7 714.6 L1204.7 713.1 L1206.7 711.6 L1208.7 710.0 L1210.6 708.5 L1212.6 707.0 L1214.6 705.4 L1216.6 703.9 L1218.6 702.4 L1220.6 700.9 L1222.5 699.3 L1224.5 697.8 L1226.5 696.3 L1228.5 694.8 L1230.5 693.2 L1232.4 691.7 L1234.4 690.2 L1236.4 688.7 L1238.4 687.1 L1240.4 685.6 L1242.4 684.1 L1244.3 682.6 L1246.3 681.0 L1248.3 679.5 L1250.3 678.0 L1252.3 676.5 L1254.3 674.9 L1256.2 673.4 L1258.2 671.9 L1260.2 670.4 L1262.2 668.8 L1264.2 667.3 L1266.1 665.8 L1268.1 664.3 L1270.1 662.7 L1272.1 661.2 L1274.1 659.7 L1276.1 658.1 L1278.0 656.6 L1280.0 655.1 L1282.0 653.6 L1284.0 652.0 L1286.0 650.5 L1287.9 649.0 L1289.9 647.5 L1291.9 645.9 L1293.9 644.4 L1295.9 642.9 L1297.9 641.4 L1299.8 639.8 L1301.8 638.3 L1303.8 636.8 L1305.8 635.3 L1307.8 633.7 L1309.8 632.2 L1311.7 630.7 L1313.7 629.2 L1315.7 627.6 L1317.7 626.1 L1319.7 624.6 L1321.6 623.1 L1323.6 621.5 L1325.6 620.0 L1327.6 618.5 L1329.6 617.0 L1331.6 615.4 L1333.5 613.9 L1335.5 612.4 L1337.5 610.8 L1339.5 609.3 L1341.5 607.8 L1343.5 606.3 L1345.4 604.7 L1347.4 603.2 L1349.4 601.7 L1351.4 600.2 L1353.4 598.6 L1355.3 597.1 L1357.3 595.6 L1359.3 594.1 L1361.3 592.5 L1363.3 591.0 L1365.3 589.5 L1367.2 588.0 L1369.2 586.4 L1371.2 584.9 L1373.2 583.4 L1375.2 581.9 L1377.2 580.3 L1379.1 578.8 L1381.1 577.3 L1383.1 575.8 L1385.1 574.2 L1387.1 572.7 L1389.0 571.2 L1391.0 569.7 L1393.0 568.1 L1395.0 566.6 L1397.0 565.1 L1399.0 563.5 L1400.9 562.0 L1402.9 560.5 L1404.9 559.0 L1406.9 557.4 L1408.9 555.9 L1410.9 554.4 L1412.8 552.9 L1414.8 551.3 L1416.8 549.8 L1418.8 548.3 L1420.8 546.8 L1422.7 545.2 L1424.7 543.7 L1426.7 542.2 L1428.7 540.7 L1430.7 539.1 L1432.7 537.6 L1434.6 536.1 L1436.6 534.6 L1438.6 533.0 L1440.6 531.5 L1442.6 530.0 L1444.6 528.5 L1446.5 526.9 L1448.5 525.4 L1450.5 523.9 L1452.5 522.4 L1454.5 520.8 L1456.4 519.3 L1458.4 517.8 L1460.4 516.3 L1462.4 514.7 L1464.4 513.2 L1466.4 511.7 L1468.3 510.1 L1470.3 508.6 L1472.3 507.1 L1474.3 505.6 L1476.3 504.0 L1478.2 502.5 L1480.2 501.0 L1482.2 499.5 L1484.2 497.9 L1486.2 496.4 L1488.2 494.9 L1490.1 493.4 L1492.1 491.8 L1494.1 490.3 L1496.1 488.8 L1498.1 487.3 L1500.1 485.7 L1502.0 484.2 L1504.0 482.7 L1506.0 481.2 L1508.0 479.6 L1510.0 478.1 L1511.9 476.6 L1513.9 475.1 L1515.9 473.5 L1517.9 472.0 L1519.9 470.5 L1521.9 469.0 L1523.8 467.4 L1525.8 465.9 L1527.8 464.4 L1529.8 462.8 L1531.8 461.3 L1533.8 459.8 L1535.7 458.3 L1537.7 456.7 L1539.7 455.2 L1541.7 453.7 L1543.7 452.2 L1545.6 450.6 L1547.6 449.1 L1549.6 447.6 L1551.6 446.1 L1553.6 444.5 L1555.6 443.0 L1557.5 441.5 L1559.5 440.0 L1561.5 438.4 L1563.5 436.9 L1565.5 435.4 L1567.5 433.9 L1569.4 432.3 L1571.4 430.8 L1573.4 429.3 L1575.4 427.8 L1577.4 426.2 L1579.3 424.7 L1581.3 423.2 L1583.3 421.7 L1585.3 420.1 L1587.3 418.6 L1589.3 417.1 L1591.2 415.5 L1593.2 414.0 L1595.2 412.5 L1597.2 411.0 L1599.2 409.4 L1601.2 407.9 L1603.1 406.4 L1605.1 404.9 L1607.1 403.3 L1609.1 401.8 L1611.1 400.3 L1613.0 398.8 L1615.0 397.2 L1617.0 395.7 L1619.0 394.2 L1621.0 392.7 L1623.0 391.1 L1623.2 390.8 L1623.2 390.4 L1622.9 390.1 L1622.3 389.8 L1621.4 389.7 L1618.9 389.3 L1616.5 389.0 L1614.0 388.7 L1611.5 388.3 L1609.0 388.0 L1606.5 387.7 L1604.0 387.4 L1601.5 387.0 L1599.1 386.7 L1596.6 386.4 L1594.1 386.0 L1591.6 385.7 L1589.1 385.4 L1586.6 385.1 L1584.2 384.7 L1581.7 384.4 L1579.2 384.1 L1576.7 383.7 L1574.2 383.4 L1571.7 383.1 L1569.3 382.8 L1566.8 382.4 L1564.3 382.1 L1561.8 381.8 L1559.3 381.4 L1556.8 381.1 L1554.4 380.8 L1551.9 380.5 L1549.4 380.1 L1546.9 379.8 L1544.4 379.5 L1541.9 379.1 L1539.5 378.8 L1537.0 378.5 L1534.5 378.2 L1532.0 377.8 L1529.5 377.5 L1527.0 377.2 L1524.5 376.8 L1522.1 376.5 L1519.6 376.2 L1517.1 375.9 L1514.6 375.5 L1512.1 375.2 L1509.6 374.9 L1508.7 374.8 L1507.6 374.8 L1506.7 375.0 L1505.9 375.2 L1505.3 375.6 L1503.3 377.1 L1501.3 378.6 L1499.4 380.1 L1497.4 381.7 L1495.4 383.2 L1493.4 384.7 L1491.4 386.2 L1489.4 387.8 L1487.5 389.3 L1485.5 390.8 L1483.5 392.3 L1481.5 393.9 L1479.5 395.4 L1477.5 396.9 L1475.6 398.4 L1473.6 400.0 L1471.6 401.5 L1469.6 403.0 L1467.6 404.6 L1465.7 406.1 L1463.7 407.6 L1461.7 409.1 L1459.7 410.7 L1457.7 412.2 L1455.7 413.7 L1453.8 415.2 L1451.8 416.8 L1449.8 418.3 L1447.8 419.8 L1445.8 421.3 L1443.8 422.9 L1441.9 424.4 L1439.9 425.9 L1437.9 427.4 L1435.9 429.0 L1433.9 430.5 L1432.0 432.0 L1430.0 433.5 L1428.0 435.1 L1426.0 436.6 L1424.0 438.1 L1422.0 439.6 L1420.1 441.2 L1418.1 442.7 L1416.1 444.2 L1414.1 445.7 L1412.1 447.3 L1410.1 448.8 L1408.2 450.3 L1406.2 451.9 L1404.2 453.4 L1402.2 454.9 L1400.2 456.4 L1398.3 458.0 L1396.3 459.5 L1394.3 461.0 L1392.3 462.5 L1390.3 464.1 L1388.3 465.6 L1386.4 467.1 L1384.4 468.6 L1382.4 470.2 L1380.4 471.7 L1378.4 473.2 L1376.4 474.7 L1374.5 476.3 L1372.5 477.8 L1370.5 479.3 L1368.5 480.8 L1366.5 482.4 L1364.6 483.9 L1362.6 485.4 L1360.6 486.9 L1358.6 488.5 L1356.6 490.0 L1354.6 491.5 L1352.7 493.0 L1350.7 494.6 L1348.7 496.1 L1346.7 497.6 L1344.7 499.2 L1342.7 500.7 L1340.8 502.2 L1338.8 503.7 L1336.8 505.3 L1334.8 506.8 L1332.8 508.3 L1330.9 509.8 L1328.9 511.4 L1326.9 512.9 L1324.9 514.4 L1322.9 515.9 L1320.9 517.5 L1319.0 519.0 L1317.0 520.5 L1315.0 522.0 L1313.0 523.6 L1311.0 525.1 L1309.1 526.6 L1307.1 528.1 L1305.1 529.7 L1303.1 531.2 L1301.1 532.7 L1299.1 534.2 L1297.2 535.8 L1295.2 537.3 L1293.2 538.8 L1291.2 540.3 L1289.2 541.9 L1287.2 543.4 L1285.3 544.9 L1283.3 546.5 L1281.3 548.0 L1279.3 549.5 L1277.3 551.0 L1275.4 552.6 L1273.4 554.1 L1271.4 555.6 L1269.4 557.1 L1267.4 558.7 L1265.4 560.2 L1263.5 561.7 L1261.5 563.2 L1259.5 564.8 L1257.5 566.3 L1255.5 567.8 L1253.5 569.3 L1251.6 570.9 L1249.6 572.4 L1247.6 573.9 L1245.6 575.4 L1243.6 577.0 L1241.7 578.5 L1239.7 580.0 L1237.7 581.5 L1235.7 583.1 L1233.7 584.6 L1231.7 586.1 L1229.8 587.6 L1227.8 589.2 L1225.8 590.7 L1223.8 592.2 L1221.8 593.8 L1219.8 595.3 L1217.9 596.8 L1215.9 598.3 L1213.9 599.9 L1211.9 601.4 L1209.9 602.9 L1208.0 604.4 L1206.0 606.0 L1204.0 607.5 L1202.0 609.0 L1200.0 610.5 L1198.0 612.1 L1196.1 613.6 L1194.1 615.1 L1192.1 616.6 L1190.1 618.2 L1188.1 619.7 L1186.1 621.2 L1184.2 622.7 L1182.2 624.3 L1180.2 625.8 L1178.2 627.3 L1176.2 628.8 L1174.3 630.4 L1172.3 631.9 L1170.3 633.4 L1168.3 634.9 L1166.3 636.5 L1164.3 638.0 L1162.4 639.5 L1160.4 641.0 L1158.4 642.6 L1156.4 644.1 L1154.4 645.6 L1152.4 647.2 L1150.5 648.7 L1148.5 650.2 L1146.5 651.7 L1144.5 653.3 L1142.5 654.8 L1140.6 656.3 L1138.6 657.8 L1136.6 659.4 L1134.6 660.9 L1132.6 662.4 L1130.6 663.9 L1128.7 665.5 L1126.7 667.0 L1124.7 668.5 L1122.7 670.0 L1120.7 671.6 L1118.8 673.1 L1116.8 674.6 L1114.8 676.1 L1112.8 677.7 L1110.8 679.2 L1108.8 680.7 L1106.9 682.2 L1104.9 683.8 L1102.9 685.3 L1100.9 686.8 L1098.9 688.3 L1096.9 689.9 L1095.0 691.4 L1093.0 692.9 L1091.0 694.5 L1089.0 696.0 L1087.0 697.5 L1085.1 699.0 L1083.1 700.6 L1081.1 702.1 L1079.1 703.6 L1077.1 705.1 L1075.1 706.7 L1074.8 707.0 L1074.9 707.4 L1075.2 707.7 L1075.8 708.0 L1076.7 708.1 L1079.2 708.5 L1081.6 708.8 L1084.1 709.1 L1086.6 709.4 L1089.1 709.8 L1091.6 710.1 L1094.1 710.4 L1096.5 710.8 L1099.0 711.1 L1101.5 711.4 L1104.0 711.7 L1106.5 712.1 L1109.0 712.4 L1111.5 712.7 L1113.9 713.1 L1116.4 713.4 L1118.9 713.7 L1121.4 714.0 L1123.9 714.4 L1126.4 714.7 L1128.8 715.0 L1131.3 715.4 L1133.8 715.7 L1136.3 716.0 L1138.8 716.3 L1141.3 716.7 L1143.7 717.0 L1146.2 717.3 L1148.7 717.7 L1151.2 718.0 L1153.7 718.3 L1156.2 718.6 L1158.6 719.0 L1161.1 719.3 L1163.6 719.6 L1166.1 720.0 L1168.6 720.3 L1171.1 720.6 L1173.5 721.0 L1176.0 721.3 L1178.5 721.6 L1181.0 721.9 L1183.5 722.3 L1186.0 722.6 L1188.5 722.9 M1233.6 533.6 L1236.2 534.0 L1238.8 534.3 L1241.3 534.6 L1243.9 535.0 L1246.5 535.3 L1249.1 535.7 L1251.6 536.0 L1254.2 536.3 L1256.8 536.7 L1259.3 537.0 L1261.9 537.4 L1264.5 537.7 L1267.1 538.0 L1269.6 538.4 L1272.2 538.7 L1274.8 539.1 L1277.4 539.4 L1279.9 539.7 L1282.5 540.1 L1285.1 540.4 L1287.6 540.8 L1290.2 541.1 M1407.9 556.7 L1410.5 557.0 L1413.0 557.4 L1415.6 557.7 L1418.2 558.0 L1420.7 558.4 L1423.3 558.7 L1425.9 559.1 L1428.5 559.4 L1431.0 559.7 L1433.6 560.1 L1436.2 560.4 L1438.7 560.8 L1441.3 561.1 L1443.9 561.5 L1446.5 561.8 L1449.0 562.1 L1451.6 562.5 L1454.2 562.8 L1456.8 563.2 L1459.3 563.5 L1461.9 563.8 L1464.5 564.2 M1171.2 936.1 L1175.9 936.7 L1180.8 937.1 L1183.4 937.2 L1185.9 937.3 L1188.4 937.4 L1191.0 937.4 L1193.6 937.4 L1196.2 937.4 L1198.8 937.3 L1201.3 937.2 L1203.9 937.0 L1206.5 936.8 L1209.1 936.6 L1211.6 936.3 L1214.1 936.0 L1216.6 935.7 L1221.5 934.9 L1226.2 934.0 L1230.8 932.9 L1235.1 931.8 L1239.2 930.5 L1242.9 929.1 L1246.4 927.7 L1249.6 926.1 L1252.4 924.5 L1254.8 922.8 L1256.8 921.2 L1258.8 919.7 L1260.7 918.2 L1262.7 916.7 L1264.7 915.1 L1266.7 913.6 L1268.7 912.1 L1270.7 910.5 L1272.7 909.0 L1274.7 907.5 L1276.6 906.0 L1278.6 904.4 L1280.6 902.9 L1282.6 901.4 L1284.6 899.8 L1286.6 898.3 L1288.6 896.8 L1290.5 895.3 L1292.5 893.7 L1294.5 892.2 L1296.5 890.7 L1298.5 889.1 L1300.5 887.6 L1302.5 886.1 L1304.4 884.6 L1306.4 883.0 L1308.4 881.5 L1310.4 880.0 L1312.4 878.4 L1314.4 876.9 L1316.4 875.4 L1318.3 873.9 L1320.3 872.3 L1322.3 870.8 L1324.3 869.3 L1326.3 867.7 L1328.3 866.2 L1330.3 864.7 L1332.2 863.2 L1334.2 861.6 L1336.2 860.1 L1338.2 858.6 L1340.2 857.0 L1342.2 855.5 L1344.2 854.0 L1346.2 852.5 L1348.1 850.9 L1350.1 849.4 L1352.1 847.9 L1354.1 846.3 L1356.1 844.8 L1358.1 843.3 L1360.1 841.8 L1362.0 840.2 L1364.0 838.7 L1366.0 837.2 L1368.0 835.6 L1370.0 834.1 L1372.0 832.6 L1374.0 831.1 L1375.9 829.5 L1377.9 828.0 L1379.9 826.5 L1381.9 824.9 L1383.9 823.4 L1385.9 821.9 L1387.9 820.4 L1389.8 818.8 L1391.8 817.3 L1393.8 815.8 L1395.8 814.2 L1397.8 812.7 L1399.8 811.2 L1401.8 809.7 L1403.7 808.1 L1405.7 806.6 L1407.7 805.1 L1409.7 803.5 L1411.7 802.0 L1413.7 800.5 L1415.7 799.0 L1417.6 797.4 L1419.6 795.9 L1421.6 794.4 L1423.6 792.8 L1425.6 791.3 L1427.6 789.8 L1429.6 788.3 L1431.6 786.7 L1433.5 785.2 L1435.5 783.7 L1437.5 782.1 L1439.5 780.6 L1441.5 779.1 L1443.5 777.6 L1445.5 776.0 L1447.4 774.5 L1449.4 773.0 L1451.4 771.4 L1453.4 769.9 L1455.4 768.4 L1457.4 766.9 L1459.4 765.3 L1461.3 763.8 L1463.3 762.3 L1465.3 760.7 L1467.3 759.2 L1469.3 757.7 L1471.3 756.1 L1473.3 754.6 L1475.2 753.1 L1477.2 751.6 L1479.2 750.0 L1481.2 748.5 L1483.2 747.0 L1485.2 745.4 L1487.2 743.9 L1489.1 742.4 L1491.1 740.9 L1493.1 739.3 L1495.1 737.8 L1497.1 736.3 L1499.1 734.7 L1501.1 733.2 L1503.1 731.7 L1505.0 730.2 L1507.0 728.6 L1509.0 727.1 L1511.0 725.6 L1513.0 724.0 L1515.0 722.5 L1517.0 721.0 L1518.9 719.5 L1520.9 717.9 L1522.9 716.4 L1524.9 714.9 L1526.9 713.3 L1528.9 711.8 L1530.9 710.3 L1532.8 708.8 L1534.8 707.2 L1536.8 705.7 L1538.8 704.2 L1540.8 702.6 L1542.8 701.1 L1544.8 699.6 L1546.7 698.1 L1548.7 696.5 L1550.7 695.0 L1552.7 693.5 L1554.7 691.9 L1556.7 690.4 L1558.7 688.9 L1560.6 687.4 L1562.6 685.8 L1564.6 684.3 L1566.6 682.8 L1568.6 681.2 L1570.6 679.7 L1572.6 678.2 L1574.6 676.7 L1576.5 675.1 L1578.5 673.6 L1580.5 672.1 L1582.5 670.5 L1584.5 669.0 L1586.5 667.5 L1588.5 666.0 L1590.4 664.4 L1592.4 662.9 L1594.4 661.4 L1596.4 659.8 L1598.4 658.3 L1600.4 656.8 L1602.4 655.3 L1604.3 653.7 L1606.3 652.2 L1608.3 650.7 L1610.3 649.1 L1612.3 647.6 L1614.3 646.1 L1616.3 644.6 L1618.2 643.0 L1620.2 641.5 L1622.2 640.0 L1624.2 638.4 L1626.2 636.9 L1628.2 635.4 L1630.2 633.9 L1632.1 632.3 L1634.1 630.8 L1636.1 629.3 L1638.1 627.7 L1640.1 626.2 L1642.1 624.7 L1644.1 623.2 L1646.1 621.6 L1648.0 620.1 L1650.0 618.6 L1652.0 617.0 L1654.0 615.5 L1656.0 614.0 L1658.0 612.5 L1660.0 610.9 L1661.9 609.4 L1663.9 607.9 L1665.9 606.3 L1667.9 604.8 L1669.9 603.3 L1671.9 601.7 L1673.9 600.2 L1675.8 598.7 L1677.8 597.2 L1679.8 595.6 L1681.8 594.1 L1683.8 592.6 L1685.8 591.0 L1687.8 589.5 L1689.8 587.8 L1691.4 586.0 L1692.7 584.2 L1693.5 582.4 L1693.9 580.5 L1693.8 578.7 M1017.8 901.2 L1017.9 903.0 L1018.4 904.8 L1019.3 906.6 L1020.6 908.3 L1022.3 910.0 L1024.4 911.5 L1026.9 913.0 L1029.8 914.5 L1033.0 915.8 L1036.6 917.0 L1040.4 918.1 L1044.5 919.0 L1048.9 919.8 L1053.5 920.5 L1056.0 920.9 L1058.5 921.2 L1061.0 921.5 L1063.5 921.9 L1066.0 922.2 L1068.5 922.5 L1071.0 922.8 L1073.5 923.2 L1076.0 923.5 L1078.5 923.8 L1081.0 924.2 L1083.5 924.5 L1086.0 924.8 L1088.5 925.2 L1091.0 925.5 L1093.5 925.8 L1096.0 926.2 L1098.6 926.5 L1101.1 926.8 L1103.6 927.2 L1106.1 927.5 L1108.6 927.8 L1111.1 928.2 L1113.6 928.5 L1116.1 928.8 L1118.6 929.1 L1121.1 929.5 L1123.6 929.8 L1126.1 930.1 L1128.6 930.5 L1131.1 930.8 L1133.6 931.1 L1136.1 931.5 L1138.6 931.8 L1141.1 932.1 L1143.6 932.5 L1146.1 932.8 L1148.6 933.1 L1151.1 933.5 L1153.6 933.8 L1156.1 934.1 L1158.6 934.4 L1161.1 934.8 L1163.6 935.1 L1166.1 935.4 L1168.6 935.8 L1171.2 936.1 M1076.7 708.1 L1076.8 710.7 L1076.9 713.2 L1076.9 715.7 L1077.0 718.2 L1077.1 720.8 L1077.2 723.3 L1077.3 725.8 L1077.4 728.3 L1077.5 730.9 L1077.6 733.4 M1075.1 706.7 L1075.2 709.2 M1188.5 722.9 L1188.5 725.4 L1188.6 728.0 L1188.7 730.5 L1188.8 733.0 L1188.9 735.6 L1189.0 738.1 L1189.1 740.6 L1189.2 743.1 L1189.3 745.7 M1192.8 722.2 L1192.9 724.8 L1193.0 727.3 L1193.1 729.8 L1193.2 732.3 L1193.2 734.9 L1193.3 737.4 L1193.4 739.9 L1193.5 742.4 L1193.6 745.0 M1623.0 391.1 L1623.0 393.7 L1623.1 396.2 L1623.2 398.7 L1623.3 401.2 L1623.4 403.8 L1623.5 406.3 L1623.6 408.8 L1623.7 411.3 L1623.8 413.9 L1623.9 416.4 L1623.9 418.9 L1624.0 421.4 L1624.1 424.0 L1624.2 426.5 L1624.3 429.0 L1624.4 431.6 L1624.5 434.1 L1624.6 436.6 L1624.7 439.1 L1624.7 441.7 M1621.4 389.7 L1621.5 392.2 M1509.6 374.9 L1509.7 377.4 L1509.8 379.9 L1509.9 382.4 L1510.0 385.0 L1510.1 387.5 L1510.2 390.0 L1510.3 392.6 L1510.4 395.1 L1510.4 397.6 L1510.5 400.1 L1510.6 402.7 L1510.7 405.2 L1510.8 407.7 L1510.9 410.2 L1511.0 412.8 L1511.1 415.3 L1511.2 417.8 L1511.3 420.3 L1511.3 422.9 L1511.4 425.4 L1511.5 427.9 L1511.6 430.4 L1511.7 433.0 L1511.8 435.5 L1511.9 438.0 L1512.0 440.5 L1512.1 443.1 L1512.1 445.6 L1512.2 448.1 L1512.3 450.7 L1512.4 453.2 L1512.5 455.7 L1512.6 458.2 L1512.7 460.8 L1512.8 463.3 L1512.9 465.8 L1513.0 468.3 L1513.0 470.9 L1513.1 473.4 L1513.2 475.9 M1505.3 375.6 L1505.4 378.1 L1505.5 380.6 L1505.6 383.1 L1505.7 385.7 L1505.7 388.2 L1505.8 390.7 L1505.9 393.2 L1506.0 395.8 L1506.1 398.3 L1506.2 400.8 L1506.3 403.3 L1506.4 405.9 L1506.5 408.4 L1506.5 410.9 L1506.6 413.5 L1506.7 416.0 L1506.8 418.5 L1506.9 421.0 L1507.0 423.6 L1507.1 426.1 L1507.2 428.6 L1507.3 431.1 L1507.4 433.7 L1507.4 436.2 L1507.5 438.7 L1507.6 441.2 L1507.7 443.8 L1507.8 446.3 L1507.9 448.8 L1508.0 451.3 L1508.1 453.9 L1508.2 456.4 L1508.2 458.9 L1508.3 461.4 L1508.4 464.0 L1508.5 466.5 L1508.6 469.0 L1508.7 471.6 L1508.8 474.1 L1508.9 476.6 L1509.0 479.1 M1046.7 728.6 L1046.8 731.1 L1046.9 733.6 L1047.0 736.1 L1047.0 738.7 L1047.1 741.2 L1047.2 743.7 L1047.3 746.2 L1047.4 748.8 L1047.5 751.3 L1047.6 753.8 L1047.7 756.3 L1047.8 758.9 L1047.9 761.4 L1047.9 763.9 L1048.0 766.4 L1048.1 769.0 L1048.2 771.5 L1048.3 774.0 L1048.4 776.5 L1048.5 779.1 L1048.6 781.6 L1048.7 784.1 L1048.7 786.7 L1048.8 789.2 L1048.9 791.7 L1049.0 794.2 L1049.1 796.8 L1049.2 799.3 L1049.3 801.8 L1049.4 804.3 L1049.5 806.9 L1049.6 809.4 L1049.6 811.9 L1049.7 814.4 L1049.8 817.0 L1049.9 819.5 L1050.0 822.0 L1050.1 824.5 L1050.2 827.1 L1050.3 829.6 L1050.4 832.1 L1050.4 834.6 L1050.5 837.2 L1050.6 839.7 L1050.7 842.2 L1050.8 844.8 L1050.9 847.3 L1051.0 849.8 L1051.1 852.3 L1051.2 854.9 L1051.3 857.4 L1051.3 859.9 L1051.4 862.4 L1051.5 865.0 L1051.6 867.5 L1051.7 870.0 L1051.8 872.5 L1051.9 875.1 L1052.0 877.6 L1052.1 880.1 L1052.1 882.6 L1052.2 885.2 L1052.3 887.7 L1052.4 890.2 L1052.5 892.7 L1052.6 895.3 L1052.7 897.8 L1052.8 900.3 L1052.9 902.8 L1053.0 905.4 L1053.0 907.9 L1053.1 910.4 L1053.2 913.0 L1053.3 915.5 L1053.4 918.0 L1053.5 920.5 M1164.4 744.1 L1164.4 746.7 L1164.5 749.2 L1164.6 751.7 L1164.7 754.2 L1164.8 756.8 L1164.9 759.3 L1165.0 761.8 L1165.1 764.3 L1165.2 766.9 L1165.2 769.4 L1165.3 771.9 L1165.4 774.4 L1165.5 777.0 L1165.6 779.5 L1165.7 782.0 L1165.8 784.5 L1165.9 787.1 L1166.0 789.6 L1166.1 792.1 L1166.1 794.6 L1166.2 797.2 L1166.3 799.7 L1166.4 802.2 L1166.5 804.8 L1166.6 807.3 L1166.7 809.8 L1166.8 812.3 L1166.9 814.9 L1166.9 817.4 L1167.0 819.9 L1167.1 822.4 L1167.2 825.0 L1167.3 827.5 L1167.4 830.0 L1167.5 832.5 L1167.6 835.1 L1167.7 837.6 L1167.8 840.1 L1167.8 842.6 L1167.9 845.2 L1168.0 847.7 L1168.1 850.2 L1168.2 852.7 L1168.3 855.3 L1168.4 857.8 L1168.5 860.3 L1168.6 862.8 L1168.6 865.4 L1168.7 867.9 L1168.8 870.4 L1168.9 873.0 L1169.0 875.5 L1169.1 878.0 L1169.2 880.5 L1169.3 883.1 L1169.4 885.6 L1169.5 888.1 L1169.5 890.6 L1169.6 893.2 L1169.7 895.7 L1169.8 898.2 L1169.9 900.7 L1170.0 903.3 L1170.1 905.8 L1170.2 908.3 L1170.3 910.8 L1170.3 913.4 L1170.4 915.9 L1170.5 918.4 L1170.6 920.9 L1170.7 923.5 L1170.8 926.0 L1170.9 928.5 L1171.0 931.1 L1171.1 933.6 L1171.2 936.1 M1248.0 730.8 L1248.1 733.3 L1248.2 735.9 L1248.3 738.4 L1248.3 740.9 L1248.4 743.4 L1248.5 746.0 L1248.6 748.5 L1248.7 751.0 L1248.8 753.5 L1248.9 756.1 L1249.0 758.6 L1249.1 761.1 L1249.2 763.6 L1249.2 766.2 L1249.3 768.7 L1249.4 771.2 L1249.5 773.7 L1249.6 776.3 L1249.7 778.8 L1249.8 781.3 L1249.9 783.8 L1250.0 786.4 L1250.0 788.9 L1250.1 791.4 L1250.2 794.0 L1250.3 796.5 L1250.4 799.0 L1250.5 801.5 L1250.6 804.1 L1250.7 806.6 L1250.8 809.1 L1250.9 811.6 L1250.9 814.2 L1251.0 816.7 L1251.1 819.2 L1251.2 821.7 L1251.3 824.3 L1251.4 826.8 L1251.5 829.3 L1251.6 831.8 L1251.7 834.4 L1251.7 836.9 L1251.8 839.4 L1251.9 841.9 L1252.0 844.5 L1252.1 847.0 L1252.2 849.5 L1252.3 852.1 L1252.4 854.6 L1252.5 857.1 L1252.6 859.6 L1252.6 862.2 L1252.7 864.7 L1252.8 867.2 L1252.9 869.7 L1253.0 872.3 L1253.1 874.8 L1253.2 877.3 L1253.3 879.8 L1253.4 882.4 L1253.4 884.9 L1253.5 887.4 L1253.6 889.9 L1253.7 892.5 L1253.8 895.0 L1253.9 897.5 L1254.0 900.0 L1254.1 902.6 L1254.2 905.1 L1254.3 907.6 L1254.3 910.1 L1254.4 912.7 L1254.5 915.2 L1254.6 917.7 L1254.7 920.3 L1254.8 922.8 M1681.0 397.5 L1681.0 400.1 L1681.1 402.6 L1681.2 405.1 L1681.3 407.6 L1681.4 410.2 L1681.5 412.7 L1681.6 415.2 L1681.7 417.8 L1681.8 420.3 L1681.9 422.8 L1681.9 425.3 L1682.0 427.9 L1682.1 430.4 L1682.2 432.9 L1682.3 435.4 L1682.4 438.0 L1682.5 440.5 L1682.6 443.0 L1682.7 445.5 L1682.7 448.1 L1682.8 450.6 L1682.9 453.1 L1683.0 455.6 L1683.1 458.2 L1683.2 460.7 L1683.3 463.2 L1683.4 465.7 L1683.5 468.3 L1683.6 470.8 L1683.6 473.3 L1683.7 475.9 L1683.8 478.4 L1683.9 480.9 L1684.0 483.4 L1684.1 486.0 L1684.2 488.5 L1684.3 491.0 L1684.4 493.5 L1684.4 496.1 L1684.5 498.6 L1684.6 501.1 L1684.7 503.6 L1684.8 506.2 L1684.9 508.7 L1685.0 511.2 L1685.1 513.7 L1685.2 516.3 L1685.3 518.8 L1685.3 521.3 L1685.4 523.8 L1685.5 526.4 L1685.6 528.9 L1685.7 531.4 L1685.8 533.9 L1685.9 536.5 L1686.0 539.0 L1686.1 541.5 L1686.1 544.1 L1686.2 546.6 L1686.3 549.1 L1686.4 551.6 L1686.5 554.2 L1686.6 556.7 L1686.7 559.2 L1686.8 561.7 L1686.9 564.3 L1687.0 566.8 L1687.0 569.3 L1687.1 571.8 L1687.2 574.4 L1687.3 576.9 L1687.4 579.4 L1687.5 581.9 L1687.6 584.5 L1687.7 587.0 L1687.8 589.5 M1651.4 369.2 L1651.5 371.8 L1651.6 374.3 L1651.7 376.8 L1651.8 379.3 L1651.9 381.9 L1651.9 384.4 L1652.0 386.9 L1652.1 389.4 L1652.2 392.0 L1652.3 394.5 L1652.4 397.0 L1652.5 399.6 L1652.6 402.1 L1652.7 404.6 L1652.7 407.1 L1652.8 409.7 L1652.9 412.2 L1653.0 414.7 L1653.1 417.2 L1653.2 419.8 M1533.7 353.7 L1533.8 356.2 L1533.9 358.7 L1534.0 361.2 L1534.1 363.8 L1534.2 366.3 L1534.3 368.8 L1534.4 371.3 L1534.5 373.9 L1534.6 376.4 L1534.6 378.9 M1450.1 367.0 L1450.2 369.5 L1450.3 372.0 L1450.4 374.6 L1450.5 377.1 L1450.6 379.6 L1450.6 382.1 L1450.7 384.7 L1450.8 387.2 L1450.9 389.7 L1451.0 392.3 L1451.1 394.8 L1451.2 397.3 L1451.3 399.8 L1451.4 402.4 L1451.4 404.9 L1451.5 407.4 L1451.6 409.9 L1451.7 412.5 L1451.8 415.0 L1451.9 417.5 M1017.1 700.2 L1017.2 702.8 L1017.3 705.3 L1017.4 707.8 L1017.5 710.4 L1017.6 712.9 L1017.7 715.4 L1017.8 717.9 L1017.9 720.5 M1233.6 533.6 L1233.7 536.1 L1233.8 538.7 L1233.9 541.2 L1234.0 543.7 L1234.1 546.2 L1234.2 548.8 L1234.2 551.3 L1234.3 553.8 L1234.4 556.4 L1234.5 558.9 L1234.6 561.4 L1234.7 563.9 L1234.8 566.5 L1234.9 569.0 L1235.0 571.5 L1235.1 574.0 L1235.1 576.6 L1235.2 579.1 L1235.3 581.6 L1235.4 584.1 M1290.2 541.1 L1290.3 543.6 L1290.4 546.2 L1290.5 548.7 L1290.6 551.2 L1290.7 553.7 L1290.8 556.3 L1290.8 558.8 L1290.9 561.3 L1291.0 563.8 L1291.1 566.4 L1291.2 568.9 L1291.3 571.4 L1291.4 573.9 L1291.5 576.5 L1291.6 579.0 L1291.7 581.5 L1291.7 584.1 L1291.8 586.6 L1291.9 589.1 L1292.0 591.6 L1292.1 594.2 L1292.2 596.7 L1292.3 599.2 L1292.4 601.7 L1292.5 604.3 L1292.5 606.8 L1292.6 609.3 L1292.7 611.8 L1292.8 614.4 L1292.9 616.9 L1293.0 619.4 L1293.1 621.9 L1293.2 624.5 L1293.3 627.0 L1293.4 629.5 L1293.4 632.0 L1293.5 634.6 L1293.6 637.1 L1293.7 639.6 L1293.8 642.2 L1293.9 644.7 M1407.9 556.7 L1408.0 559.2 L1408.1 561.7 L1408.1 564.3 L1408.2 566.8 L1408.3 569.3 L1408.4 571.8 L1408.5 574.4 L1408.6 576.9 L1408.7 579.4 L1408.8 581.9 L1408.9 584.5 L1409.0 587.0 L1409.0 589.5 L1409.1 592.0 L1409.2 594.6 L1409.3 597.1 L1409.4 599.6 L1409.5 602.2 L1409.6 604.7 L1409.7 607.2 M1464.5 564.2 L1464.6 566.7 L1464.7 569.2 L1464.7 571.8 L1464.8 574.3 L1464.9 576.8 L1465.0 579.3 L1465.1 581.9 L1465.2 584.4 L1465.3 586.9 L1465.4 589.4 L1465.5 592.0 L1465.5 594.5 L1465.6 597.0 L1465.7 599.5 L1465.8 602.1 L1465.9 604.6 L1466.0 607.1 L1466.1 609.6 L1466.2 612.2 L1466.3 614.7 L1466.4 617.2 L1466.4 619.7 L1466.5 622.3 L1466.6 624.8 L1466.7 627.3 L1466.8 629.8 L1466.9 632.4 L1467.0 634.9 L1467.1 637.4 L1467.2 640.0 L1467.2 642.5 L1467.3 645.0 L1467.4 647.5 L1467.5 650.1 L1467.6 652.6 L1467.7 655.1 L1467.8 657.6 L1467.9 660.2 L1468.0 662.7 L1468.1 665.2 L1468.1 667.7 L1468.2 670.3 L1468.3 672.8 L1468.4 675.3 L1468.5 677.8 L1468.6 680.4 L1468.7 682.9 L1468.8 685.4 L1468.9 687.9 L1468.9 690.5 L1469.0 693.0 L1469.1 695.5 L1469.2 698.1 L1469.3 700.6 L1469.4 703.1 L1469.5 705.6 L1469.6 708.2 L1469.7 710.7 L1469.8 713.2 L1469.8 715.7 L1469.9 718.3 L1470.0 720.8 L1470.1 723.3 L1470.2 725.8 L1470.3 728.4 L1470.4 730.9 L1470.5 733.4 L1470.6 735.9 L1470.6 738.5 L1470.7 741.0 L1470.8 743.5 L1470.9 746.0 L1471.0 748.6 L1471.1 751.1 L1471.2 753.6 L1471.3 756.1" fill="none" stroke="#c4f7a9" stroke-width="1.9" stroke-linecap="round"/><path d="M1233.4 532.8 L1288.4 539.8 L1235.2 579.2 Z" fill="#2496c6" stroke="#9fc3dc" stroke-width="1"/><path d="M1288.6 540 L1294.6 645" stroke="#b9b9c9" stroke-width="1.6"/></svg>
<svg style="position:absolute;left:0px;top:0px;" width="2547" height="1280" viewBox="0 0 2547 1280">
<g fill="none" stroke-linejoin="round">
<path d="M2377 1171.5 V1256.2 L2460 1266" stroke="#bdbdbd" stroke-width="1.2" stroke-dasharray="4 3"/>
<path d="M2377.5 1257 L2345.7 1282" stroke="#9fd0f0" stroke-width="1.3"/>
<path d="M2378 1257 L2488 1271" stroke="#f59a9a" stroke-width="1.6"/>
<path d="M2487 1267.5 L2504 1273.3 L2486.5 1275.2 Z" fill="#f59a9a" stroke="none"/>
<path d="M2372.6 1256 L2372.4 1140" stroke="#7be36b" stroke-width="1.6"/>
<path d="M2369 1143 L2372.4 1126.5 L2375.8 1143 Z" fill="#7be36b" stroke="none"/>
<path d="M2337.5 1200.6 L2374.6 1170.9 L2457.3 1181.3 L2419.2 1210.2 Z M2337.5 1200.6 L2339.8 1282 M2419.2 1210.2 L2421.4 1282 M2457.3 1181.3 L2460 1266 L2440.7 1282" stroke="#a9a9a9" stroke-width="1.4"/>
<path d="M2395 1116 L2402 1109.5 L2409 1116" stroke="#555" stroke-width="1.5"/>
<path d="M2292.5 1226 L2286 1232.5 L2292.5 1239" stroke="#555" stroke-width="1.5"/>
<path d="M2512 1226 L2518.5 1232.5 L2512 1239" stroke="#555" stroke-width="1.5"/>
<path d="M2467.5 1160 L2475.6 1152 L2483.7 1160 M2469.5 1158 V1168 H2473 V1162.5 H2478 V1168 H2481.7 V1158" stroke="#555" stroke-width="1.3"/>
</g>
<text x="2367.5" y="1252" font-family="Liberation Sans" font-size="13.5" fill="#777">TOP</text>
<text x="2382" y="1195" font-family="Liberation Sans" font-size="9" fill="#999" font-style="italic" transform="rotate(8 2382 1195)">LEFT</text>
<text x="0" y="0" font-family="Liberation Sans" font-size="10.5" fill="#8a8a8a" font-style="italic" transform="translate(2432.5 1249.5) rotate(-52) scale(0.9 1)">BACK</text>
<text x="2363.5" y="1120.5" font-family="Liberation Sans" font-size="19" fill="#6ee05c">Y</text>
<text x="2507" y="1289" font-family="Liberation Sans" font-size="19" fill="#e83a3a">X</text>
</svg>
<svg style="position:absolute;left:0px;top:0px;pointer-events:none" width="2547" height="1280" viewBox="0 0 2547 1280"><line x1="671.5" y1="350.2" x2="1191.5" y2="524.4" stroke="#4a86e8" stroke-width="12.2" stroke-linecap="round"/><path d="M1225.9 535.3 L1197.8 508.1 L1193.7 518.7 L1189.7 530 L1186.2 541.6 Z" fill="#4a86e8"/></svg>
<svg style="position:absolute;left:619.7px;top:76.8px;" width="42" height="42" viewBox="0 0 42 42"><circle cx="21" cy="21" r="20" fill="#4a86e8"/></svg>
<div class="t" style="left:620.7px;width:40px;text-align:center;top:81.7px;font-size:32px;color:#fff">1</div>
<svg style="position:absolute;left:614px;top:206px;" width="42" height="42" viewBox="0 0 42 42"><circle cx="21" cy="21" r="20" fill="#4a86e8"/></svg>
<div class="t" style="left:615px;width:40px;text-align:center;top:210.9px;font-size:32px;color:#fff">2</div>
<svg style="position:absolute;left:614px;top:328px;" width="42" height="42" viewBox="0 0 42 42"><circle cx="21" cy="21" r="20" fill="#4a86e8"/></svg>
<div class="t" style="left:615px;width:40px;text-align:center;top:332.9px;font-size:32px;color:#fff">3</div>
<svg style="position:absolute;left:625px;top:466px;" width="42" height="42" viewBox="0 0 42 42"><circle cx="21" cy="21" r="20" fill="#4a86e8"/></svg>
<div class="t" style="left:626px;width:40px;text-align:center;top:470.9px;font-size:32px;color:#fff">4</div>
<svg style="position:absolute;left:628.5px;top:652px;" width="42" height="42" viewBox="0 0 42 42"><circle cx="21" cy="21" r="20" fill="#4a86e8"/></svg>
<div class="t" style="left:629.5px;width:40px;text-align:center;top:656.9px;font-size:32px;color:#fff">5</div>
</body></html>
